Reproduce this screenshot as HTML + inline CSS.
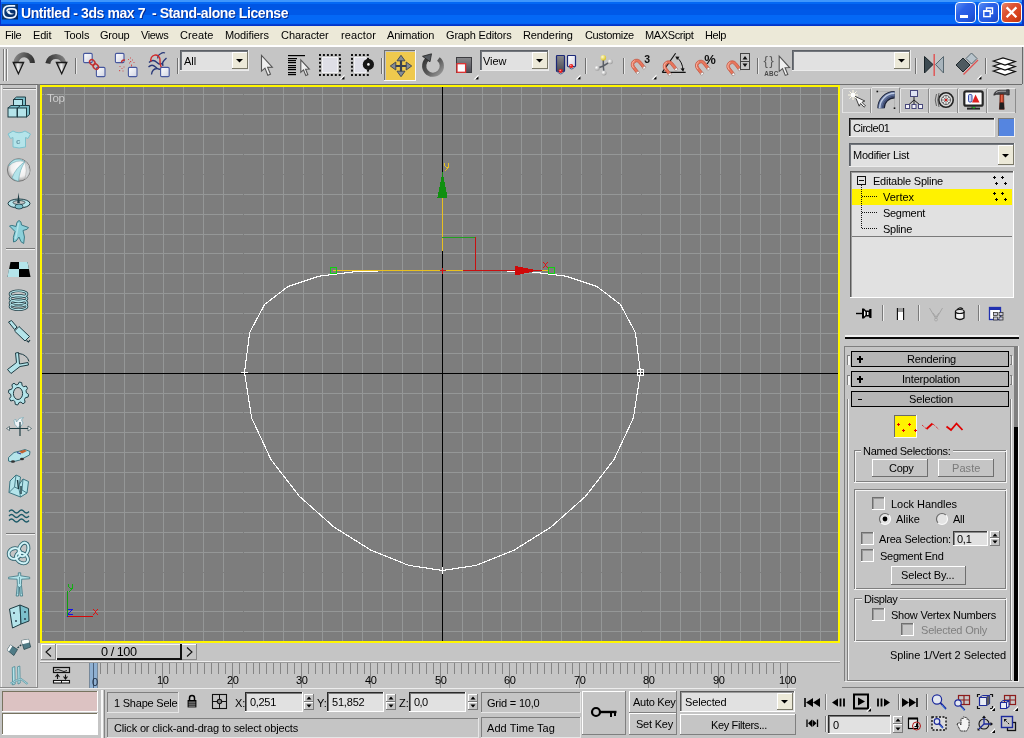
<!DOCTYPE html>
<html><head><meta charset="utf-8"><title>Untitled - 3ds max 7</title>
<style>
html,body{margin:0;padding:0;}
body{width:1024px;height:738px;overflow:hidden;position:relative;background:#c5c5c5;font-family:"Liberation Sans",sans-serif;font-size:11px;}
body div,body span,body svg{position:absolute;display:block;}
body span{white-space:nowrap;will-change:transform;}
svg{overflow:visible;}
</style></head><body>
<div style="left:0px;top:0px;width:1024px;height:26px;background:linear-gradient(to bottom,#3f96fc 0px,#3f96fc 1.6px,#0468f4 2.4px,#0468f4 3.6px,#0056e4 4.4px,#0056e4 9px,#0059e8 10px,#0059e8 14.6px,#0468f6 15.4px,#0468f6 23.4px,#0340d4 24.2px,#0030c4 26px);"></div>
<div style="left:0px;top:0px;width:1px;height:26px;background:#0831c8;"></div>
<div style="left:1022px;top:0px;width:2px;height:26px;background:#0a36c0;"></div>
<svg style="left:2px;top:4px;" width="16" height="16" viewBox="0 0 16 16"><defs><linearGradient id="gIco" x1="0" y1="0" x2="1" y2="1"><stop offset="0" stop-color="#0d478c"/><stop offset="1" stop-color="#052458"/></linearGradient></defs><rect width="16" height="15.5" fill="url(#gIco)"/><path d="M13.2 1.8 H7 Q1.5 2 1.5 7 V9 Q1.5 13.8 7 13.8 H9 Q14.3 13.8 14.3 9 V7.5 Q14.3 4.8 10.8 4.8 H8 Q5 4.8 5 7.5" fill="none" stroke="#eef6ff" stroke-width="1.7"/><path d="M5 7.5 Q5.2 10.2 9 10.6 Q11.5 10.6 12 9.2 Q10 10 8.2 8.6 Q7.2 7.6 7.8 6.4 Z" fill="#f4faff"/></svg>
<span id="t1" style="left:20.8px;top:5.199999999999999px;line-height:16px;font-size:14px;color:#fff;font-weight:bold;letter-spacing:-0.412px;text-shadow:1px 1px 0 #0a2a8a;white-space:pre;">Untitled - 3ds max 7  - Stand-alone License</span>
<div style="left:955px;top:2px;width:21px;height:21px;background:linear-gradient(135deg,#5a8ef4 0%,#2c62e8 35%,#2258e0 70%,#1a44c0 100%);border:1px solid #fff;border-radius:4px;box-sizing:border-box;"></div>
<div style="left:978px;top:2px;width:21px;height:21px;background:linear-gradient(135deg,#5a8ef4 0%,#2c62e8 35%,#2258e0 70%,#1a44c0 100%);border:1px solid #fff;border-radius:4px;box-sizing:border-box;"></div>
<div style="left:1001px;top:2px;width:21px;height:21px;background:linear-gradient(135deg,#e8866c 0%,#dc5434 35%,#d8421c 70%,#b83410 100%);border:1px solid #fff;border-radius:4px;box-sizing:border-box;"></div>
<div style="left:960px;top:15px;width:8px;height:3px;background:#fff;"></div>
<svg style="left:978px;top:2px;" width="21" height="21" viewBox="0 0 21 21"><path d="M8.5 8.5 V6 H14.5 V11.5 H12.5" fill="none" stroke="#fff" stroke-width="1.4"/><rect x="5.8" y="9" width="6.4" height="5.6" fill="none" stroke="#fff" stroke-width="1.4"/><rect x="5.1" y="8.3" width="7.8" height="1.6" fill="#fff"/></svg>
<svg style="left:1001px;top:2px;" width="21" height="21" viewBox="0 0 21 21"><path d="M5.6 5.4 L15.4 15.2 M15.4 5.4 L5.6 15.2" stroke="#fff" stroke-width="2.3" stroke-linecap="butt"/></svg>
<div style="left:0px;top:26px;width:1024px;height:19px;background:#ece9d8;"></div>
<div style="left:0px;top:45px;width:1024px;height:2px;background:#ffffff;"></div>
<span id="t2" style="left:5.1px;top:28.0px;line-height:14px;font-size:11px;color:#000;letter-spacing:-0.384px;">File</span>
<span id="t3" style="left:33.0px;top:28.0px;line-height:14px;font-size:11px;color:#000;letter-spacing:-0.167px;">Edit</span>
<span id="t4" style="left:63.5px;top:28.0px;line-height:14px;font-size:11px;color:#000;letter-spacing:-0.057px;">Tools</span>
<span id="t5" style="left:100.1px;top:28.0px;line-height:14px;font-size:11px;color:#000;letter-spacing:-0.236px;">Group</span>
<span id="t6" style="left:141.2px;top:28.0px;line-height:14px;font-size:11px;color:#000;letter-spacing:-0.371px;">Views</span>
<span id="t7" style="left:180.3px;top:28.0px;line-height:14px;font-size:11px;color:#000;letter-spacing:0.078px;">Create</span>
<span id="t8" style="left:225.0px;top:28.0px;line-height:14px;font-size:11px;color:#000;letter-spacing:-0.092px;">Modifiers</span>
<span id="t9" style="left:280.5px;top:28.0px;line-height:14px;font-size:11px;color:#000;letter-spacing:-0.066px;">Character</span>
<span id="t10" style="left:340.5px;top:28.0px;line-height:14px;font-size:11px;color:#000;letter-spacing:0.107px;">reactor</span>
<span id="t11" style="left:387.4px;top:28.0px;line-height:14px;font-size:11px;color:#000;letter-spacing:-0.202px;">Animation</span>
<span id="t12" style="left:446.3px;top:28.0px;line-height:14px;font-size:11px;color:#000;letter-spacing:-0.175px;">Graph Editors</span>
<span id="t13" style="left:523.1px;top:28.0px;line-height:14px;font-size:11px;color:#000;letter-spacing:-0.107px;">Rendering</span>
<span id="t14" style="left:584.5px;top:28.0px;line-height:14px;font-size:11px;color:#000;letter-spacing:-0.352px;">Customize</span>
<span id="t15" style="left:645.0px;top:28.0px;line-height:14px;font-size:11px;color:#000;letter-spacing:-0.385px;">MAXScript</span>
<span id="t16" style="left:705.2px;top:28.0px;line-height:14px;font-size:11px;color:#000;letter-spacing:-0.456px;">Help</span>
<div style="left:0px;top:47px;width:1024px;height:37px;background:#c5c5c5;"></div>
<div style="left:3px;top:49px;width:1px;height:32px;background:#7a7a7a;"></div>
<div style="left:4px;top:49px;width:1px;height:32px;background:#f4f4f4;"></div>
<div style="left:6px;top:49px;width:1px;height:32px;background:#7a7a7a;"></div>
<div style="left:7px;top:49px;width:1px;height:32px;background:#f4f4f4;"></div>
<div style="left:1022px;top:47px;width:1px;height:37px;background:#6a6a6a;"></div>
<div style="left:75px;top:58px;width:1px;height:16px;background:#6f6f6f;"></div>
<div style="left:76px;top:58px;width:1px;height:16px;background:#e8e8e8;"></div>
<div style="left:177px;top:58px;width:1px;height:16px;background:#6f6f6f;"></div>
<div style="left:178px;top:58px;width:1px;height:16px;background:#e8e8e8;"></div>
<div style="left:381px;top:58px;width:1px;height:16px;background:#6f6f6f;"></div>
<div style="left:382px;top:58px;width:1px;height:16px;background:#e8e8e8;"></div>
<div style="left:585px;top:58px;width:1px;height:16px;background:#6f6f6f;"></div>
<div style="left:586px;top:58px;width:1px;height:16px;background:#e8e8e8;"></div>
<div style="left:623px;top:58px;width:1px;height:16px;background:#6f6f6f;"></div>
<div style="left:624px;top:58px;width:1px;height:16px;background:#e8e8e8;"></div>
<div style="left:757px;top:58px;width:1px;height:16px;background:#6f6f6f;"></div>
<div style="left:758px;top:58px;width:1px;height:16px;background:#e8e8e8;"></div>
<div style="left:915px;top:58px;width:1px;height:16px;background:#6f6f6f;"></div>
<div style="left:916px;top:58px;width:1px;height:16px;background:#e8e8e8;"></div>
<div style="left:985px;top:58px;width:1px;height:16px;background:#6f6f6f;"></div>
<div style="left:986px;top:58px;width:1px;height:16px;background:#e8e8e8;"></div>
<div style="left:180px;top:50px;width:69px;height:21px;background:#e1e1e1;"></div>
<div style="left:180px;top:50px;width:69px;height:1px;background:#5c6066;"></div>
<div style="left:180px;top:50px;width:1px;height:21px;background:#5c6066;"></div>
<div style="left:180px;top:70px;width:69px;height:1px;background:#ececec;"></div>
<div style="left:248px;top:50px;width:1px;height:21px;background:#ececec;"></div>
<div style="left:181px;top:51px;width:67px;height:1px;background:#72767c;"></div>
<div style="left:181px;top:51px;width:1px;height:19px;background:#72767c;"></div>
<div style="left:232px;top:52px;width:16px;height:17px;background:#ece9d8;"></div>
<div style="left:232px;top:52px;width:16px;height:1px;background:#ffffff;"></div>
<div style="left:232px;top:52px;width:1px;height:17px;background:#ffffff;"></div>
<div style="left:232px;top:68px;width:16px;height:1px;background:#7a7868;"></div>
<div style="left:247px;top:52px;width:1px;height:17px;background:#7a7868;"></div>
<svg style="left:236px;top:59px;" width="8" height="4" viewBox="0 0 8 4"><path d="M0 0 H7 L3.5 3.5 Z" fill="#000"/></svg>
<span id="t17" style="left:183.6px;top:53.7px;line-height:14px;font-size:11px;color:#000;letter-spacing:-0.011px;">All</span>
<div style="left:480px;top:50px;width:69px;height:21px;background:#e1e1e1;"></div>
<div style="left:480px;top:50px;width:69px;height:1px;background:#5c6066;"></div>
<div style="left:480px;top:50px;width:1px;height:21px;background:#5c6066;"></div>
<div style="left:480px;top:70px;width:69px;height:1px;background:#ececec;"></div>
<div style="left:548px;top:50px;width:1px;height:21px;background:#ececec;"></div>
<div style="left:481px;top:51px;width:67px;height:1px;background:#72767c;"></div>
<div style="left:481px;top:51px;width:1px;height:19px;background:#72767c;"></div>
<div style="left:532px;top:52px;width:16px;height:17px;background:#ece9d8;"></div>
<div style="left:532px;top:52px;width:16px;height:1px;background:#ffffff;"></div>
<div style="left:532px;top:52px;width:1px;height:17px;background:#ffffff;"></div>
<div style="left:532px;top:68px;width:16px;height:1px;background:#7a7868;"></div>
<div style="left:547px;top:52px;width:1px;height:17px;background:#7a7868;"></div>
<svg style="left:536px;top:59px;" width="8" height="4" viewBox="0 0 8 4"><path d="M0 0 H7 L3.5 3.5 Z" fill="#000"/></svg>
<span id="t18" style="left:482.8px;top:53.7px;line-height:14px;font-size:11px;color:#000;letter-spacing:-0.039px;">View</span>
<div style="left:792px;top:50px;width:119px;height:21px;background:#e1e1e1;"></div>
<div style="left:792px;top:50px;width:119px;height:1px;background:#5c6066;"></div>
<div style="left:792px;top:50px;width:1px;height:21px;background:#5c6066;"></div>
<div style="left:792px;top:70px;width:119px;height:1px;background:#ececec;"></div>
<div style="left:910px;top:50px;width:1px;height:21px;background:#ececec;"></div>
<div style="left:793px;top:51px;width:117px;height:1px;background:#72767c;"></div>
<div style="left:793px;top:51px;width:1px;height:19px;background:#72767c;"></div>
<div style="left:894px;top:52px;width:16px;height:17px;background:#ece9d8;"></div>
<div style="left:894px;top:52px;width:16px;height:1px;background:#ffffff;"></div>
<div style="left:894px;top:52px;width:1px;height:17px;background:#ffffff;"></div>
<div style="left:894px;top:68px;width:16px;height:1px;background:#7a7868;"></div>
<div style="left:909px;top:52px;width:1px;height:17px;background:#7a7868;"></div>
<svg style="left:898px;top:59px;" width="8" height="4" viewBox="0 0 8 4"><path d="M0 0 H7 L3.5 3.5 Z" fill="#000"/></svg>
<div style="left:386px;top:52px;width:29px;height:28px;background:#efc94e;"></div>
<div style="left:384px;top:50px;width:32px;height:1px;background:#6f6f6f;"></div>
<div style="left:384px;top:50px;width:1px;height:31px;background:#6f6f6f;"></div>
<div style="left:384px;top:80px;width:32px;height:1px;background:#f8f8f8;"></div>
<div style="left:415px;top:50px;width:1px;height:31px;background:#f8f8f8;"></div>
<svg style="left:0px;top:0px;" width="1024" height="90" viewBox="0 0 1024 90"><defs><linearGradient id="gArc" gradientUnits="userSpaceOnUse" x1="13" y1="56" x2="35" y2="64"><stop offset="0" stop-color="#8e8e8e"/><stop offset="0.55" stop-color="#505050"/><stop offset="1" stop-color="#2a2a2a"/></linearGradient><linearGradient id="gArc2" gradientUnits="userSpaceOnUse" x1="45" y1="64" x2="67" y2="56"><stop offset="0" stop-color="#2a2a2a"/><stop offset="0.45" stop-color="#505050"/><stop offset="1" stop-color="#8e8e8e"/></linearGradient><linearGradient id="gHead" x1="0" y1="0" x2="1" y2="0"><stop offset="0" stop-color="#4a4a4a"/><stop offset="0.45" stop-color="#f4f4f4"/><stop offset="1" stop-color="#6a6a6a"/></linearGradient><linearGradient id="gBox" x1="0" y1="0" x2="1" y2="1"><stop offset="0" stop-color="#ffffff"/><stop offset="1" stop-color="#cfd3e2"/></linearGradient><linearGradient id="gRing" gradientUnits="userSpaceOnUse" x1="422" y1="56" x2="442" y2="76"><stop offset="0" stop-color="#2a2a2a"/><stop offset="0.55" stop-color="#5a5a5a"/><stop offset="1" stop-color="#a0a0a0"/></linearGradient><linearGradient id="gDark" x1="0" y1="0" x2="0" y2="1"><stop offset="0" stop-color="#8a8a8c"/><stop offset="1" stop-color="#4a4a54"/></linearGradient><radialGradient id="gBall" cx="0.35" cy="0.35" r="0.7"><stop offset="0" stop-color="#ffffff"/><stop offset="1" stop-color="#9a9a9a"/></radialGradient><radialGradient id="gBallY" cx="0.35" cy="0.35" r="0.7"><stop offset="0" stop-color="#fffbd0"/><stop offset="1" stop-color="#d8c020"/></radialGradient></defs><path d="M32.4 63 A8.2 8.4 0 0 0 16 63.5" fill="none" stroke="url(#gArc)" stroke-width="5"/><path d="M13.2 62.5 H23.6 L18.4 73.8 Z" fill="url(#gHead)" stroke="#1a1a1a" stroke-width="1.3"/><path d="M47.8 63.5 A8.2 8.4 0 0 1 64 63.5" fill="none" stroke="url(#gArc2)" stroke-width="5"/><path d="M56.4 62.5 H66.8 L61.7 73.8 Z" fill="url(#gHead)" stroke="#1a1a1a" stroke-width="1.3"/><rect x="83.6" y="53.4" width="8.6" height="9.2" rx="1.2" fill="url(#gBox)" stroke="#46579e" stroke-width="1.1"/><rect x="96.4" y="67.4" width="8.6" height="9.2" rx="1.2" fill="url(#gBox)" stroke="#46579e" stroke-width="1.1"/><ellipse cx="92.3" cy="62.4" rx="2.3" ry="3" fill="none" stroke="#c03030" stroke-width="1.5" transform="rotate(-45 92.3 62.4)"/><ellipse cx="95.8" cy="66.6" rx="2.3" ry="3" fill="none" stroke="#c03030" stroke-width="1.5" transform="rotate(-45 95.8 66.6)"/><rect x="115.4" y="53.4" width="8.6" height="9.2" rx="1.2" fill="url(#gBox)" stroke="#46579e" stroke-width="1.1"/><rect x="128.4" y="67.4" width="8.6" height="9.2" rx="1.2" fill="url(#gBox)" stroke="#46579e" stroke-width="1.1"/><path d="M121.5 62.5 q0.5 -3 3.4 -2.2" fill="none" stroke="#c03030" stroke-width="1.6"/><g fill="#d05050"><rect x="128" y="59" width="1" height="1"/><rect x="130" y="61" width="1.2" height="1.2"/><rect x="132" y="59.5" width="1" height="1"/><rect x="133.5" y="62" width="1" height="1"/><rect x="129" y="62.5" width="1" height="1"/><rect x="130" y="57.5" width="1" height="1"/><rect x="119.5" y="66" width="1" height="1"/><rect x="121.5" y="68" width="1" height="1"/><rect x="119" y="70" width="1.2" height="1.2"/><rect x="122.5" y="70.5" width="1" height="1"/><rect x="123.5" y="66.5" width="1" height="1"/><rect x="131" y="64.5" width="1" height="2"/></g><path d="M149 62.5 q4 -4 8 0 q3 3 5.5 0.5 M148.5 67 q3.5 -3.5 7 0 q3 3.5 6 1.5 M151.5 74.5 q0.5 -5.5 5.5 -6 M158 58.5 q-1 -3 3 -5 q2 -1.5 4 -0.5 M163 66 q-1.5 -3 1 -5.5 q1.5 -1.5 2.5 -2.5" fill="none" stroke="#283878" stroke-width="1.3"/><path d="M151.2 61.5 A4.6 4.6 0 1 1 160 60 Q159.5 64 161.5 68" fill="none" stroke="#d02828" stroke-width="1.4"/><rect x="160.6" y="67.4" width="8.6" height="9.2" rx="1.2" fill="url(#gBox)" stroke="#46579e" stroke-width="1.1"/><path transform="translate(261.5 55.3) scale(1.02)" d="M0 0 V15.5 L3.4 12.6 L6.2 19.6 L8.8 18.6 L6 11.8 L10.6 11.6 Z" fill="#f0f0f0" stroke="#555" stroke-width="1.08"/><rect x="288" y="55" width="17" height="1.2" fill="#000"/><rect x="288" y="58" width="9" height="1.2" fill="#000"/><rect x="288" y="60" width="8" height="1.2" fill="#000"/><rect x="288" y="62" width="8" height="1.2" fill="#000"/><rect x="288" y="65" width="8" height="1.2" fill="#000"/><rect x="288" y="67" width="8" height="1.2" fill="#000"/><rect x="288" y="69" width="8" height="1.2" fill="#000"/><rect x="288" y="72" width="8" height="1.2" fill="#000"/><rect x="288" y="74" width="8" height="1.2" fill="#000"/><path transform="translate(300.8 59.8) scale(0.8)" d="M0 0 V15.5 L3.4 12.6 L6.2 19.6 L8.8 18.6 L6 11.8 L10.6 11.6 Z" fill="#f0f0f0" stroke="#555" stroke-width="1.38"/><rect x="322.5" y="57.5" width="15" height="15" fill="#dedee6" stroke="#f0f0f4" stroke-width="1"/><rect x="319.0" y="54" width="2" height="2" fill="#111"/><rect x="319.0" y="74" width="2" height="2" fill="#111"/><rect x="322.9" y="54" width="2" height="2" fill="#111"/><rect x="322.9" y="74" width="2" height="2" fill="#111"/><rect x="326.9" y="54" width="2" height="2" fill="#111"/><rect x="326.9" y="74" width="2" height="2" fill="#111"/><rect x="330.8" y="54" width="2" height="2" fill="#111"/><rect x="330.8" y="74" width="2" height="2" fill="#111"/><rect x="334.8" y="54" width="2" height="2" fill="#111"/><rect x="334.8" y="74" width="2" height="2" fill="#111"/><rect x="338.7" y="54" width="2" height="2" fill="#111"/><rect x="338.7" y="74" width="2" height="2" fill="#111"/><rect x="319" y="57.9" width="2" height="2" fill="#111"/><rect x="339" y="57.9" width="2" height="2" fill="#111"/><rect x="319" y="61.8" width="2" height="2" fill="#111"/><rect x="339" y="61.8" width="2" height="2" fill="#111"/><rect x="319" y="65.7" width="2" height="2" fill="#111"/><rect x="339" y="65.7" width="2" height="2" fill="#111"/><rect x="319" y="69.6" width="2" height="2" fill="#111"/><rect x="339" y="69.6" width="2" height="2" fill="#111"/><path d="M344.5 74.5 V79.5 H339.5 Z" fill="#ffffff"/><path d="M344.5 76.3 V79.5 H341.3 Z" fill="#000"/><rect x="354.5" y="57.5" width="11.5" height="15" fill="#dedee6" stroke="#f0f0f4" stroke-width="1"/><rect x="351.0" y="54" width="2" height="2" fill="#111"/><rect x="351.0" y="74" width="2" height="2" fill="#111"/><rect x="354.9" y="54" width="2" height="2" fill="#111"/><rect x="354.9" y="74" width="2" height="2" fill="#111"/><rect x="358.9" y="54" width="2" height="2" fill="#111"/><rect x="358.9" y="74" width="2" height="2" fill="#111"/><rect x="362.8" y="54" width="2" height="2" fill="#111"/><rect x="362.8" y="74" width="2" height="2" fill="#111"/><rect x="366.8" y="54" width="2" height="2" fill="#111"/><rect x="366.8" y="74" width="2" height="2" fill="#111"/><rect x="351" y="57.9" width="2" height="2" fill="#111"/><rect x="367" y="57.9" width="2" height="2" fill="#111"/><rect x="351" y="61.8" width="2" height="2" fill="#111"/><rect x="367" y="61.8" width="2" height="2" fill="#111"/><rect x="351" y="65.7" width="2" height="2" fill="#111"/><rect x="367" y="65.7" width="2" height="2" fill="#111"/><rect x="351" y="69.6" width="2" height="2" fill="#111"/><rect x="367" y="69.6" width="2" height="2" fill="#111"/><circle cx="368.4" cy="64.4" r="5.6" fill="#161616"/><circle cx="368.4" cy="64.4" r="1.3" fill="#f4f4f4"/><path d="M401 58 V74 M393 66 H409" stroke="#3a4250" stroke-width="2.2"/><g fill="#868c94" stroke="#3a4250" stroke-width="0.9"><path d="M401 55.3 L405 60.8 H397 Z"/><path d="M401 76.7 L405 71.2 H397 Z"/><path d="M390.3 66 L395.8 62 V70 Z"/><path d="M411.7 66 L406.2 62 V70 Z"/></g><path d="M428.2 58.6 A8.8 8.8 0 1 0 438.4 59" fill="none" stroke="url(#gRing)" stroke-width="4.2"/><path d="M422.5 56.3 L431.5 53.8 L430 61.8 Z" fill="#55595e" stroke="#222" stroke-width="0.8"/><rect x="456.5" y="57.5" width="15" height="15" fill="url(#gDark)" stroke="#3c3c40" stroke-width="1"/><rect x="457" y="63.7" width="8.6" height="8.6" fill="#fafcff" stroke="#e03030" stroke-width="1.3"/><path d="M478.5 74.5 V79.5 H473.5 Z" fill="#ffffff"/><path d="M478.5 76.3 V79.5 H475.3 Z" fill="#000"/><rect x="556.5" y="55.5" width="8" height="16" rx="0.8" fill="url(#gDark)" stroke="#1c2878" stroke-width="1.2"/><rect x="567.5" y="55.5" width="8" height="11" rx="0.8" fill="url(#gBox)" stroke="#1c2878" stroke-width="1.2"/><path d="M556.8 71 q4 6 7.6 0 M567.8 66 q4 6 7.6 0" fill="none" stroke="#4a5a8a" stroke-width="0.9"/><circle cx="560.6" cy="71" r="2.1" fill="#e82020"/><circle cx="571.2" cy="66" r="2.1" fill="#e82020"/><circle cx="560.2" cy="70.5" r="0.7" fill="#ffb0b0"/><circle cx="570.8" cy="65.5" r="0.7" fill="#ffb0b0"/><path d="M580.5 74.5 V79.5 H575.5 Z" fill="#ffffff"/><path d="M580.5 76.3 V79.5 H577.3 Z" fill="#000"/><path d="M603.3 66 L603.3 58 M603.3 66 L610.3 61.7 M603.3 66 L597.2 68.2 M603.3 66 L604 73" stroke="#5a5e66" stroke-width="1.5"/><circle cx="603.3" cy="57.7" r="2.8" fill="url(#gBallY)"/><circle cx="610.3" cy="61.7" r="2.5" fill="url(#gBall)"/><circle cx="597.2" cy="68.2" r="2.5" fill="url(#gBall)"/><circle cx="604" cy="73" r="2.5" fill="url(#gBall)"/><g transform="translate(636.6 64.6) rotate(-38)"><path d="M-5.4 0 A5.4 5.4 0 0 1 5.4 0 V7.6 H2.7 V0 A2.7 2.7 0 0 0 -2.7 0 V7.6 H-5.4 Z" fill="#e8765c" stroke="#c04a34" stroke-width="0.6"/><path d="M-4.4 1 V0 A4.4 4.4 0 0 1 1 -4.3" fill="none" stroke="#f8b8a8" stroke-width="0.9"/><rect x="-5.4" y="6.2" width="2.7" height="2" fill="#fcfcfc" stroke="#8a8a8a" stroke-width="0.5"/><rect x="2.7" y="6.2" width="2.7" height="2" fill="#fcfcfc" stroke="#8a8a8a" stroke-width="0.5"/></g><text x="644.2" y="62.6" font-size="10.5" font-weight="bold" font-family="Liberation Sans" fill="#111">3</text><path d="M656.5 74.5 V79.5 H651.5 Z" fill="#ffffff"/><path d="M656.5 76.3 V79.5 H653.3 Z" fill="#000"/><path d="M662.2 72.4 H685.7 M662.2 72.4 L675.6 53.3" fill="none" stroke="#111" stroke-width="1.1"/><path d="M677 57.5 Q682.5 62 683 70" fill="none" stroke="#111" stroke-width="1"/><path d="M675.3 56.4 l4.2 0.3 l-2.4 3.3 Z M683.2 71.8 l-2.7 -3.3 l4 -0.3 Z" fill="#111"/><g transform="translate(668.6 66.2) rotate(-38)"><path d="M-5.4 0 A5.4 5.4 0 0 1 5.4 0 V7.6 H2.7 V0 A2.7 2.7 0 0 0 -2.7 0 V7.6 H-5.4 Z" fill="#e8765c" stroke="#c04a34" stroke-width="0.6"/><path d="M-4.4 1 V0 A4.4 4.4 0 0 1 1 -4.3" fill="none" stroke="#f8b8a8" stroke-width="0.9"/><rect x="-5.4" y="6.2" width="2.7" height="2" fill="#fcfcfc" stroke="#8a8a8a" stroke-width="0.5"/><rect x="2.7" y="6.2" width="2.7" height="2" fill="#fcfcfc" stroke="#8a8a8a" stroke-width="0.5"/></g><g transform="translate(700.8 65.6) rotate(-38)"><path d="M-5.4 0 A5.4 5.4 0 0 1 5.4 0 V7.6 H2.7 V0 A2.7 2.7 0 0 0 -2.7 0 V7.6 H-5.4 Z" fill="#e8765c" stroke="#c04a34" stroke-width="0.6"/><path d="M-4.4 1 V0 A4.4 4.4 0 0 1 1 -4.3" fill="none" stroke="#f8b8a8" stroke-width="0.9"/><rect x="-5.4" y="6.2" width="2.7" height="2" fill="#fcfcfc" stroke="#8a8a8a" stroke-width="0.5"/><rect x="2.7" y="6.2" width="2.7" height="2" fill="#fcfcfc" stroke="#8a8a8a" stroke-width="0.5"/></g><text x="704.3" y="64" font-size="13" font-weight="bold" font-family="Liberation Sans" fill="#111">%</text><g transform="translate(732.2 66.2) rotate(-38)"><path d="M-5.4 0 A5.4 5.4 0 0 1 5.4 0 V7.6 H2.7 V0 A2.7 2.7 0 0 0 -2.7 0 V7.6 H-5.4 Z" fill="#e8765c" stroke="#c04a34" stroke-width="0.6"/><path d="M-4.4 1 V0 A4.4 4.4 0 0 1 1 -4.3" fill="none" stroke="#f8b8a8" stroke-width="0.9"/><rect x="-5.4" y="6.2" width="2.7" height="2" fill="#fcfcfc" stroke="#8a8a8a" stroke-width="0.5"/><rect x="2.7" y="6.2" width="2.7" height="2" fill="#fcfcfc" stroke="#8a8a8a" stroke-width="0.5"/></g><rect x="740.5" y="53.5" width="9" height="8" fill="#c8c8c8" stroke="#444" stroke-width="1"/><rect x="740.5" y="61.5" width="9" height="8" fill="#c8c8c8" stroke="#444" stroke-width="1"/><path d="M742.5 59.5 h5 l-2.5 -3.5 Z M742.5 63.5 h5 l-2.5 3.5 Z" fill="#111"/><text x="763.6" y="65" font-size="13.5" font-family="Liberation Sans" fill="#5a5a5a" letter-spacing="1.2">{}</text><text x="764.3" y="75.7" font-size="6.3" font-weight="bold" font-family="Liberation Sans" fill="#4a4a4a" letter-spacing="0.2">ABC</text><path transform="translate(779.2 56.2) scale(0.98)" d="M0 0 V15.5 L3.4 12.6 L6.2 19.6 L8.8 18.6 L6 11.8 L10.6 11.6 Z" fill="#f0f0f0" stroke="#555" stroke-width="1.12"/><path d="M924.5 56.5 V73 L933 64.5 Z" fill="#3c4a52" stroke="#1a2428" stroke-width="1"/><path d="M943.5 56.5 V73 L935.5 64.5 Z" fill="#a8b4bc" stroke="#56666e" stroke-width="1"/><path d="M934.2 54 V76" stroke="#e05858" stroke-width="1.5"/><path d="M956 65 L963 58 L970 65 L963 72 Z" fill="#4e5a60" stroke="#20282c" stroke-width="1"/><path d="M966 58.5 L971.5 53 L977 58.5 L971.5 64 Z" fill="#b8c4cc" stroke="#56666e" stroke-width="1"/><path d="M963.5 74.5 L978 60" stroke="#e05050" stroke-width="1.3"/><path d="M981.5 74.5 V79.5 H976.5 Z" fill="#ffffff"/><path d="M981.5 76.3 V79.5 H978.3 Z" fill="#000"/><g fill="#fff" stroke="#111" stroke-width="1.3" stroke-linejoin="miter"><path d="M993.5 71 L1003 68 L1015 71.5 L1005 75 Z"/><path d="M993.5 66 L1003 63 L1015 66.5 L1005 70 Z"/><path d="M993.5 61 L1003 58 L1015 61.5 L1005 65 Z"/></g></svg>
<div style="left:0px;top:84px;width:1022px;height:1px;background:#6f6f6f;"></div>
<div style="left:38px;top:84px;width:2px;height:560px;background:#808080;"></div>
<div style="left:40px;top:85px;width:800px;height:558px;background:#fff600;"></div>
<div style="left:42px;top:87px;width:796px;height:554px;background:#7d7d7d;"></div>
<svg style="left:0px;top:0px;shape-rendering:crispEdges;" width="1024" height="738" viewBox="0 0 1024 738"><rect x="64" y="87" width="1" height="554" fill="#959797"/><rect x="84" y="87" width="1" height="554" fill="#959797"/><rect x="104" y="87" width="1" height="554" fill="#959797"/><rect x="124" y="87" width="1" height="554" fill="#959797"/><rect x="143" y="87" width="1" height="554" fill="#959797"/><rect x="163" y="87" width="1" height="554" fill="#959797"/><rect x="42" y="94" width="796" height="1" fill="#959797"/><rect x="183" y="87" width="1" height="554" fill="#959797"/><rect x="42" y="114" width="796" height="1" fill="#959797"/><rect x="203" y="87" width="1" height="554" fill="#959797"/><rect x="42" y="134" width="796" height="1" fill="#959797"/><rect x="223" y="87" width="1" height="554" fill="#959797"/><rect x="42" y="154" width="796" height="1" fill="#959797"/><rect x="263" y="87" width="1" height="554" fill="#959797"/><rect x="42" y="194" width="796" height="1" fill="#959797"/><rect x="283" y="87" width="1" height="554" fill="#959797"/><rect x="42" y="214" width="796" height="1" fill="#959797"/><rect x="303" y="87" width="1" height="554" fill="#959797"/><rect x="42" y="234" width="796" height="1" fill="#959797"/><rect x="322" y="87" width="1" height="554" fill="#959797"/><rect x="42" y="253" width="796" height="1" fill="#959797"/><rect x="342" y="87" width="1" height="554" fill="#959797"/><rect x="42" y="273" width="796" height="1" fill="#959797"/><rect x="362" y="87" width="1" height="554" fill="#959797"/><rect x="42" y="293" width="796" height="1" fill="#959797"/><rect x="382" y="87" width="1" height="554" fill="#959797"/><rect x="42" y="313" width="796" height="1" fill="#959797"/><rect x="402" y="87" width="1" height="554" fill="#959797"/><rect x="42" y="333" width="796" height="1" fill="#959797"/><rect x="422" y="87" width="1" height="554" fill="#959797"/><rect x="42" y="353" width="796" height="1" fill="#959797"/><rect x="462" y="87" width="1" height="554" fill="#959797"/><rect x="42" y="393" width="796" height="1" fill="#959797"/><rect x="482" y="87" width="1" height="554" fill="#959797"/><rect x="42" y="412" width="796" height="1" fill="#959797"/><rect x="501" y="87" width="1" height="554" fill="#959797"/><rect x="42" y="432" width="796" height="1" fill="#959797"/><rect x="521" y="87" width="1" height="554" fill="#959797"/><rect x="42" y="452" width="796" height="1" fill="#959797"/><rect x="541" y="87" width="1" height="554" fill="#959797"/><rect x="42" y="472" width="796" height="1" fill="#959797"/><rect x="561" y="87" width="1" height="554" fill="#959797"/><rect x="42" y="492" width="796" height="1" fill="#959797"/><rect x="581" y="87" width="1" height="554" fill="#959797"/><rect x="42" y="512" width="796" height="1" fill="#959797"/><rect x="601" y="87" width="1" height="554" fill="#959797"/><rect x="42" y="532" width="796" height="1" fill="#959797"/><rect x="621" y="87" width="1" height="554" fill="#959797"/><rect x="42" y="552" width="796" height="1" fill="#959797"/><rect x="660" y="87" width="1" height="554" fill="#959797"/><rect x="42" y="591" width="796" height="1" fill="#959797"/><rect x="680" y="87" width="1" height="554" fill="#959797"/><rect x="42" y="611" width="796" height="1" fill="#959797"/><rect x="700" y="87" width="1" height="554" fill="#959797"/><rect x="42" y="631" width="796" height="1" fill="#959797"/><rect x="720" y="87" width="1" height="554" fill="#959797"/><rect x="740" y="87" width="1" height="554" fill="#959797"/><rect x="760" y="87" width="1" height="554" fill="#959797"/><rect x="780" y="87" width="1" height="554" fill="#959797"/><rect x="800" y="87" width="1" height="554" fill="#959797"/><rect x="820" y="87" width="1" height="554" fill="#959797"/><rect x="44" y="87" width="1" height="554" fill="#7d7d7d"/><rect x="243" y="87" width="1" height="554" fill="#7d7d7d"/><rect x="42" y="174" width="796" height="1" fill="#7d7d7d"/><rect x="641" y="87" width="1" height="554" fill="#7d7d7d"/><rect x="42" y="572" width="796" height="1" fill="#7d7d7d"/><rect x="442" y="87" width="1" height="554" fill="#000"/><rect x="42" y="373" width="796" height="1" fill="#000"/><polyline points="442.5,270.5 397.1,270.4 355.4,271.6 318.7,276.2 288.0,286.5 264.6,304.5 249.7,332.4 244.5,372.5 251.6,417.9 271.0,459.6 299.4,496.3 333.9,527.0 371.3,550.4 408.5,565.3 442.5,570.5 476.5,565.3 513.7,550.4 551.1,527.0 585.6,496.3 614.0,459.6 633.4,417.9 640.5,372.5 635.3,332.4 620.4,304.5 597.0,286.5 566.3,276.2 529.6,271.6 487.9,270.4 442.5,270.5" fill="none" stroke="#ffffff" stroke-width="1.1"/><path d="M241 372.5 h7 M244.5 369 v7 M439 570.5 h7 M442.5 567 v7" stroke="#fff" stroke-width="1"/><rect x="637.5" y="369.5" width="6" height="6" fill="none" stroke="#fff" stroke-width="1"/><path d="M637 372.5 h7 M640.5 369 v7" stroke="#fff" stroke-width="1"/><rect x="333" y="270" width="130" height="1" fill="#e8c020"/><rect x="541" y="270" width="8" height="1" fill="#e8c020"/><rect x="330.5" y="267.5" width="6" height="6" fill="none" stroke="#10d010" stroke-width="1"/><rect x="548.5" y="267.5" width="6" height="6" fill="none" stroke="#10d010" stroke-width="1"/><rect x="442" y="197" width="1" height="54" fill="#e8c020"/><path d="M442.5 172 L447.5 197.5 H437.5 Z" fill="#109010"/><rect x="442" y="237" width="34" height="1" fill="#20a020"/><rect x="475" y="237" width="1" height="34" fill="#c81010"/><rect x="463" y="270" width="79" height="1" fill="#c81010"/><path d="M515 266 V275.5 L538 270.5 Z" fill="#d00808"/><path d="M439.5 270.5 h6 M442.5 267.5 v6" stroke="#d01010" stroke-width="1"/><rect x="68" y="616" width="25" height="1" fill="#d40808"/><rect x="67" y="591" width="1" height="25" fill="#10a010"/><rect x="67" y="616" width="1" height="1" fill="#1010e0"/><rect x="543" y="262" width="1" height="1" fill="#e01010"/><rect x="547" y="262" width="1" height="1" fill="#e01010"/><rect x="544" y="263" width="1" height="1" fill="#e01010"/><rect x="546" y="263" width="1" height="1" fill="#e01010"/><rect x="545" y="264" width="1" height="1" fill="#e01010"/><rect x="545" y="265" width="1" height="1" fill="#e01010"/><rect x="544" y="266" width="1" height="1" fill="#e01010"/><rect x="546" y="266" width="1" height="1" fill="#e01010"/><rect x="543" y="267" width="1" height="1" fill="#e01010"/><rect x="547" y="267" width="1" height="1" fill="#e01010"/><rect x="444" y="163" width="1" height="1" fill="#e8c020"/><rect x="448" y="163" width="1" height="1" fill="#e8c020"/><rect x="444" y="164" width="1" height="1" fill="#e8c020"/><rect x="448" y="164" width="1" height="1" fill="#e8c020"/><rect x="444" y="165" width="1" height="1" fill="#e8c020"/><rect x="448" y="165" width="1" height="1" fill="#e8c020"/><rect x="445" y="166" width="1" height="1" fill="#e8c020"/><rect x="448" y="166" width="1" height="1" fill="#e8c020"/><rect x="446" y="167" width="1" height="1" fill="#e8c020"/><rect x="447" y="167" width="1" height="1" fill="#e8c020"/><rect x="448" y="167" width="1" height="1" fill="#e8c020"/><rect x="447" y="168" width="1" height="1" fill="#e8c020"/><rect x="446" y="169" width="1" height="1" fill="#e8c020"/><rect x="445" y="170" width="1" height="1" fill="#e8c020"/><rect x="93" y="609" width="1" height="1" fill="#e01010"/><rect x="97" y="609" width="1" height="1" fill="#e01010"/><rect x="94" y="610" width="1" height="1" fill="#e01010"/><rect x="96" y="610" width="1" height="1" fill="#e01010"/><rect x="95" y="611" width="1" height="1" fill="#e01010"/><rect x="95" y="612" width="1" height="1" fill="#e01010"/><rect x="94" y="613" width="1" height="1" fill="#e01010"/><rect x="96" y="613" width="1" height="1" fill="#e01010"/><rect x="93" y="614" width="1" height="1" fill="#e01010"/><rect x="97" y="614" width="1" height="1" fill="#e01010"/><rect x="68" y="584" width="1" height="1" fill="#10b010"/><rect x="72" y="584" width="1" height="1" fill="#10b010"/><rect x="68" y="585" width="1" height="1" fill="#10b010"/><rect x="72" y="585" width="1" height="1" fill="#10b010"/><rect x="68" y="586" width="1" height="1" fill="#10b010"/><rect x="72" y="586" width="1" height="1" fill="#10b010"/><rect x="69" y="587" width="1" height="1" fill="#10b010"/><rect x="72" y="587" width="1" height="1" fill="#10b010"/><rect x="70" y="588" width="1" height="1" fill="#10b010"/><rect x="71" y="588" width="1" height="1" fill="#10b010"/><rect x="72" y="588" width="1" height="1" fill="#10b010"/><rect x="71" y="589" width="1" height="1" fill="#10b010"/><rect x="70" y="590" width="1" height="1" fill="#10b010"/><rect x="69" y="591" width="1" height="1" fill="#10b010"/><rect x="68" y="609" width="1" height="1" fill="#1414e8"/><rect x="69" y="609" width="1" height="1" fill="#1414e8"/><rect x="70" y="609" width="1" height="1" fill="#1414e8"/><rect x="71" y="609" width="1" height="1" fill="#1414e8"/><rect x="72" y="609" width="1" height="1" fill="#1414e8"/><rect x="71" y="610" width="1" height="1" fill="#1414e8"/><rect x="70" y="611" width="1" height="1" fill="#1414e8"/><rect x="69" y="612" width="1" height="1" fill="#1414e8"/><rect x="68" y="613" width="1" height="1" fill="#1414e8"/><rect x="68" y="614" width="1" height="1" fill="#1414e8"/><rect x="69" y="614" width="1" height="1" fill="#1414e8"/><rect x="70" y="614" width="1" height="1" fill="#1414e8"/><rect x="71" y="614" width="1" height="1" fill="#1414e8"/><rect x="72" y="614" width="1" height="1" fill="#1414e8"/></svg>
<span id="t19" style="left:47px;top:91.0px;line-height:14px;font-size:11.5px;color:#cdcdcd;letter-spacing:-0.349px;">Top</span>
<div style="left:0px;top:85px;width:38px;height:603px;background:#c5c5c5;"></div>
<div style="left:1px;top:85px;width:1px;height:603px;background:#f0f0f0;"></div>
<div style="left:36px;top:85px;width:1px;height:603px;background:#e8e8e8;"></div>
<div style="left:37px;top:85px;width:1px;height:603px;background:#8a8a8a;"></div>
<div style="left:0px;top:687px;width:38px;height:1px;background:#8a8a8a;"></div>
<div style="left:3px;top:88px;width:33px;height:1px;background:#7a7a7a;"></div>
<div style="left:3px;top:89px;width:33px;height:1px;background:#f0f0f0;"></div>
<div style="left:6px;top:248px;width:29px;height:1px;background:#7a7a7a;"></div>
<div style="left:6px;top:249px;width:29px;height:1px;background:#f0f0f0;"></div>
<div style="left:6px;top:533px;width:29px;height:1px;background:#7a7a7a;"></div>
<div style="left:6px;top:534px;width:29px;height:1px;background:#f0f0f0;"></div>
<svg style="left:0px;top:0px;" width="64" height="738" viewBox="0 0 64 738"><path d="M13.5 99.5 l3 -2.5 h9 v9 l-3 2.5 Z" fill="#7cc0cc" stroke="#1e3c44" stroke-width="1"/><rect x="13.5" y="99.5" width="9" height="9" fill="#b4e4ea" stroke="#1e3c44" stroke-width="1"/><path d="M8 108.0 l3 -2.5 h9 v9 l-3 2.5 Z" fill="#7cc0cc" stroke="#1e3c44" stroke-width="1"/><rect x="8" y="108.0" width="9" height="9" fill="#b4e4ea" stroke="#1e3c44" stroke-width="1"/><path d="M17.5 108.0 l3 -2.5 h9 v9 l-3 2.5 Z" fill="#7cc0cc" stroke="#1e3c44" stroke-width="1"/><rect x="17.5" y="108.0" width="9" height="9" fill="#b4e4ea" stroke="#1e3c44" stroke-width="1"/><path d="M8 134 L13 131 Q19 134.5 25 131 L30.5 134 L28 138.5 L25.5 137.5 V147 Q19 149 13 147 V137.5 L10.5 138.5 Z" fill="#b4e4ea" stroke="#7cc0cc" stroke-width="1"/><text x="16" y="143.5" font-size="8" font-weight="bold" font-family="Liberation Sans" fill="#6a9aa8">c</text><defs><radialGradient id="gSph" cx="0.55" cy="0.4" r="0.65"><stop offset="0" stop-color="#ffffff"/><stop offset="0.6" stop-color="#eeeeee"/><stop offset="1" stop-color="#8c8c8c"/></radialGradient></defs><circle cx="18.7" cy="170" r="11.3" fill="url(#gSph)" stroke="#6a6a6a" stroke-width="0.8"/><path d="M25 161.5 Q16 159 8.5 166 Q10 161.5 15 159.5 Q20 158 25 161.5 Z" fill="#b4e4ea" stroke="#5a98a4" stroke-width="0.5"/><path d="M25 161.5 Q15.5 168 12 178 Q14.5 180.5 18.5 181.3 Q19.5 170 25 161.5 Z" fill="#b4e4ea" stroke="#5a98a4" stroke-width="0.5"/><path d="M25 161.5 Q27.5 170 25 179.5 Q28.5 176.5 29.8 172 Q29.5 166 25 161.5 Z" fill="#d4d8da" stroke="#9a9a9a" stroke-width="0.4"/><ellipse cx="19" cy="203.5" rx="11" ry="4.5" fill="#b4e4ea" stroke="#1e3c44" stroke-width="1"/><ellipse cx="19" cy="202.5" rx="6" ry="2" fill="#c5c5c5" stroke="#1e3c44" stroke-width="0.8"/><path d="M18.5 192.5 L19.8 203 L17.2 203 Z" fill="#1e3c44"/><ellipse cx="19" cy="206.5" rx="4" ry="2.5" fill="#7cc0cc" stroke="#1e3c44" stroke-width="0.8"/><path d="M19 220.5 Q21.5 221 21.5 225 L28.5 227.5 Q28.5 229.5 23 230.5 Q25.5 237 23.7 243.5 Q20.5 243 19 237 Q16 242.5 13.5 242 Q12.5 238 15 231.5 L9.5 226 Q11 224.5 16 226.5 Q16.5 221 19 220.5 Z" fill="#8cd0da" stroke="#3c7884" stroke-width="1"/><path d="M18.5 223 Q17.5 230 15.5 239" fill="none" stroke="#b4e4ea" stroke-width="1.6"/><path d="M10.5 262 H27.5 L30.5 277 H7.5 Z" fill="#000"/><path d="M19 262 H27.5 L28.9 269 H19 Z M19 269 H8.9 L7.5 277 H19 Z" fill="#b4e4ea"/><ellipse cx="18.5" cy="294" rx="8.5" ry="3.2" fill="none" stroke="#1e3c44" stroke-width="2.6"/><ellipse cx="18.5" cy="298.5" rx="8.5" ry="3.2" fill="none" stroke="#1e3c44" stroke-width="2.6"/><ellipse cx="18.5" cy="303" rx="8.5" ry="3.2" fill="none" stroke="#1e3c44" stroke-width="2.6"/><ellipse cx="18.5" cy="306.5" rx="8.5" ry="3.2" fill="none" stroke="#1e3c44" stroke-width="2.6"/><ellipse cx="18.5" cy="294" rx="8.5" ry="3.2" fill="none" stroke="#b4e4ea" stroke-width="1.2"/><ellipse cx="18.5" cy="298.5" rx="8.5" ry="3.2" fill="none" stroke="#b4e4ea" stroke-width="1.2"/><ellipse cx="18.5" cy="303" rx="8.5" ry="3.2" fill="none" stroke="#b4e4ea" stroke-width="1.2"/><ellipse cx="18.5" cy="306.5" rx="8.5" ry="3.2" fill="none" stroke="#b4e4ea" stroke-width="1.2"/><path d="M8.5 322 L11.5 320.5 L17 327 L14.5 329.5 Z" fill="#b4e4ea" stroke="#1e3c44" stroke-width="1"/><path d="M14.5 331 L19 326.5 L29.5 336.5 L25 341 Z" fill="#b4e4ea" stroke="#1e3c44" stroke-width="1"/><path d="M26.5 340.5 l2 1.5 l1.5 -2" fill="none" stroke="#1e3c44" stroke-width="1.2"/><path d="M15.5 353 L18.5 352.5 L19.5 364 L28 362.5 L28.5 365 L20 366.5 L11 373.5 L7.5 369.5 L16.5 362.5 Z" fill="#b4e4ea" stroke="#1e3c44" stroke-width="1"/><path d="M19 353.5 Q27 354.5 29 361.5" fill="none" stroke="#1e3c44" stroke-width="1"/><path d="M28.6 394.4 L28.1 397.1 L25.6 397.6 L24.5 399.4 L25.1 402.3 L23.0 403.8 L20.9 402.1 L19.1 402.5 L17.7 405.0 L15.3 404.4 L14.9 401.5 L13.3 400.3 L10.8 401.0 L9.5 398.7 L11.0 396.3 L10.6 394.2 L8.4 392.6 L8.9 389.9 L11.4 389.4 L12.5 387.6 L11.9 384.7 L14.0 383.2 L16.1 384.9 L17.9 384.5 L19.3 382.0 L21.7 382.6 L22.1 385.5 L23.7 386.7 L26.2 386.0 L27.5 388.3 L26.0 390.7 L26.4 392.8 Z" fill="#b4e4ea" stroke="#1e3c44" stroke-width="1"/><ellipse cx="18" cy="393.5" rx="4.6" ry="6" fill="#c5c5c5" stroke="#1e3c44" stroke-width="1"/><path d="M14 420.5 L15.5 419 L16.5 422 Q19 417 23.5 417.5 L21.5 420 L23 423 Q22 427 17.5 427.5 Q14 425 14 420.5 Z" fill="#f0f4f8" stroke="#7aa8b4" stroke-width="0.8"/><path d="M7 428.5 H31 M20 422 V436" stroke="#1e3c44" stroke-width="1.2"/><path d="M6.5 428.5 l3 -2 v4 Z M31.5 428.5 l-3.5 -2.5 v5 Z" fill="#f4f4f4" stroke="#1e3c44" stroke-width="0.6"/><path d="M8.5 457.5 L14 452.5 L20 451 L25 449.5 L30 451.5 L29.5 455 L20 460 L12 462 L8.5 461 Z" fill="#b4e4ea" stroke="#3c7480" stroke-width="1"/><path d="M19 451.5 L24.5 449.8 L27 451 L22 453.5 Z" fill="#c06030"/><path d="M17 452.5 l4 1.5" stroke="#30408c" stroke-width="1.2"/><ellipse cx="13" cy="461.5" rx="2" ry="1.3" fill="#333"/><ellipse cx="22" cy="459" rx="2" ry="1.3" fill="#333"/><path d="M10 481 L16 475 L20.5 477 L19.5 484 L23 479 L28.5 481.5 L27 493 L20.5 497 L9 492.5 Z" fill="#b4e4ea" stroke="#3c7480" stroke-width="1"/><path d="M16 475 L14.5 487 L9 492.5 M14.5 487 L19 489 L20.5 497 M19.5 484 L19 489 M23 479 L22 490 L27 493" fill="none" stroke="#3c7480" stroke-width="0.9"/><path d="M17.5 480 l1 9 M21 486 l0 8" stroke="#1e3c44" stroke-width="1.4"/><path d="M9 511.5 q2.5 -3 5 0 t5 0 t5 0 t5 0" fill="none" stroke="#1c5a68" stroke-width="1.3"/><path d="M9 516 q2.5 -3 5 0 t5 0 t5 0 t5 0" fill="none" stroke="#1c5a68" stroke-width="1.3"/><path d="M9 520.5 q2.5 -3 5 0 t5 0 t5 0 t5 0" fill="none" stroke="#1c5a68" stroke-width="1.3"/><g fill="none" stroke="#2c5c68" stroke-width="3.8"><ellipse cx="14.5" cy="553.5" rx="6" ry="5.2" transform="rotate(-20 14.5 553.5)"/><ellipse cx="23.5" cy="549.5" rx="4.6" ry="7" transform="rotate(20 23.5 549.5)"/><ellipse cx="22" cy="558" rx="6.5" ry="4.8" transform="rotate(35 22 558)"/></g><g fill="none" stroke="#b4e4ea" stroke-width="2.2"><ellipse cx="14.5" cy="553.5" rx="6" ry="5.2" transform="rotate(-20 14.5 553.5)"/><ellipse cx="23.5" cy="549.5" rx="4.6" ry="7" transform="rotate(20 23.5 549.5)"/><ellipse cx="22" cy="558" rx="6.5" ry="4.8" transform="rotate(35 22 558)"/></g><g fill="none" stroke="#eafcff" stroke-width="0.7"><ellipse cx="14.5" cy="553.5" rx="6" ry="5.2" transform="rotate(-20 14.5 553.5)"/><ellipse cx="23.5" cy="549.5" rx="4.6" ry="7" transform="rotate(20 23.5 549.5)"/><ellipse cx="22" cy="558" rx="6.5" ry="4.8" transform="rotate(35 22 558)"/></g><path d="M18.3 572.8 h2.4 v3 l9 1.4 v1.6 l-8 0.4 l-0.3 5.5 l1.2 11.3 h-2.3 l-0.9 -9 l-0.9 9 h-2.3 l1.2 -11.3 l-0.3 -5.5 l-8.5 -0.4 v-1.6 l9.7 -1.4 Z" fill="#b4e4ea" stroke="#3c7480" stroke-width="0.8"/><path d="M19.5 577 v7 M18.6 586 l-0.6 8 M20.6 586 l0.6 8" stroke="#4a8490" stroke-width="0.7"/><path d="M9.5 609 L20 605 L21 624 L12.5 628 Z" fill="#b4e4ea" stroke="#1e3c44" stroke-width="1"/><path d="M20 605 L28.5 608.5 L29 621 L21 624 Z" fill="#7cc0cc" stroke="#1e3c44" stroke-width="1"/><circle cx="14" cy="613" r="0.9" fill="#234"/><circle cx="16" cy="621" r="0.9" fill="#234"/><circle cx="25" cy="612" r="0.9" fill="#234"/><circle cx="25" cy="619" r="0.9" fill="#234"/><path d="M10.4 645 L17.5 649.5 L13.8 655.6 L7.2 650 Z" fill="#4f7b86" stroke="#2c4a52" stroke-width="0.8"/><path d="M10.4 645 L12.3 646.2 L9 651.5 L7.2 650 Z" fill="#f8fcfd"/><path d="M21.5 640.6 L28.5 639.3 L30.7 647 L24 649.5 Z" fill="#4f7b86" stroke="#2c4a52" stroke-width="0.8"/><path d="M21.5 640.6 L28.5 639.3 L29.4 642.6 L22.5 644.2 Z" fill="#f8fcfd"/><path d="M17.5 648 L21.5 644.5" stroke="#1e3c44" stroke-width="1.2" stroke-dasharray="2 1"/><path d="M12.3 667.5 L14.8 666.5 L15.2 684 L12.6 685 Z M17.6 666.8 L19.8 666 L20.2 683 L18 684 Z" fill="#b4e4ea" stroke="#4a8894" stroke-width="0.8"/><path d="M10.6 683.7 L16.5 680.4 L21 679 L27.6 684" fill="none" stroke="#5a9aa6" stroke-width="2"/><path d="M10.6 683.7 L16.5 680.4 L21 679 L27.6 684" fill="none" stroke="#dff4f8" stroke-width="0.6"/></svg>
<div style="left:842px;top:85px;width:182px;height:603px;background:#c5c5c5;"></div>
<div style="left:842px;top:88px;width:29px;height:25px;background:#c5c5c5;"></div>
<div style="left:843px;top:88px;width:27px;height:1px;background:#e6e6e6;"></div>
<div style="left:842px;top:89px;width:1px;height:24px;background:#e6e6e6;"></div>
<div style="left:870px;top:89px;width:1px;height:24px;background:#8c8c8c;"></div>
<div style="left:843px;top:112px;width:27px;height:1px;background:#e0e0e0;"></div>
<div style="left:871px;top:87px;width:29px;height:26px;background:#c5c5c5;"></div>
<div style="left:872px;top:87px;width:27px;height:1px;background:#e6e6e6;"></div>
<div style="left:871px;top:88px;width:1px;height:25px;background:#e6e6e6;"></div>
<div style="left:899px;top:88px;width:1px;height:25px;background:#8c8c8c;"></div>
<div style="left:900px;top:88px;width:29px;height:25px;background:#c5c5c5;"></div>
<div style="left:901px;top:88px;width:27px;height:1px;background:#e6e6e6;"></div>
<div style="left:900px;top:89px;width:1px;height:24px;background:#e6e6e6;"></div>
<div style="left:928px;top:89px;width:1px;height:24px;background:#8c8c8c;"></div>
<div style="left:901px;top:112px;width:27px;height:1px;background:#e0e0e0;"></div>
<div style="left:929px;top:88px;width:29px;height:25px;background:#c5c5c5;"></div>
<div style="left:930px;top:88px;width:27px;height:1px;background:#e6e6e6;"></div>
<div style="left:929px;top:89px;width:1px;height:24px;background:#e6e6e6;"></div>
<div style="left:957px;top:89px;width:1px;height:24px;background:#8c8c8c;"></div>
<div style="left:930px;top:112px;width:27px;height:1px;background:#e0e0e0;"></div>
<div style="left:958px;top:88px;width:29px;height:25px;background:#c5c5c5;"></div>
<div style="left:959px;top:88px;width:27px;height:1px;background:#e6e6e6;"></div>
<div style="left:958px;top:89px;width:1px;height:24px;background:#e6e6e6;"></div>
<div style="left:986px;top:89px;width:1px;height:24px;background:#8c8c8c;"></div>
<div style="left:959px;top:112px;width:27px;height:1px;background:#e0e0e0;"></div>
<div style="left:987px;top:88px;width:29px;height:25px;background:#c5c5c5;"></div>
<div style="left:988px;top:88px;width:27px;height:1px;background:#e6e6e6;"></div>
<div style="left:987px;top:89px;width:1px;height:24px;background:#e6e6e6;"></div>
<div style="left:1015px;top:89px;width:1px;height:24px;background:#8c8c8c;"></div>
<div style="left:988px;top:112px;width:27px;height:1px;background:#e0e0e0;"></div>
<svg style="left:0px;top:0px;" width="1024" height="738" viewBox="0 0 1024 738"><path transform="translate(855.2 96.4) rotate(-22) scale(0.68)" d="M0 0 V15.5 L3.4 12.6 L6.2 19.6 L8.8 18.6 L6 11.8 L10.6 11.6 Z" fill="#f8f8f8" stroke="#333" stroke-width="1.2"/><path d="M853 90 V100 M848 95 H858 M849.5 91.5 L856.5 98.5 M856.5 91.5 L849.5 98.5" stroke="#fffbe6" stroke-width="1"/><circle cx="853" cy="95" r="2.2" fill="#ffffff"/><path d="M877.5 91.5 H894.5 V108" fill="none" stroke="#8a8a8a" stroke-width="0.6" stroke-dasharray="1 1"/><path d="M881.0500000000001 108.2 A13.55 13.55 0 0 1 894.6 94.65" fill="none" stroke="#1a2034" stroke-width="7.5"/><path d="M880.30000000001 108.2 A14.3 14.3 0 0 1 894.6 93.9" fill="none" stroke="#5c6e98" stroke-width="4.4"/><path d="M879.7 108.2 A14.9 14.9 0 0 1 894.6 93.3" fill="none" stroke="#c0cce4" stroke-width="1.5"/><path d="M883.0 108.2 A11.6 11.6 0 0 1 894.6 96.600000000001" fill="none" stroke="#46547c" stroke-width="1.4"/><rect x="876.5" y="90.7" width="1.6" height="1.6" fill="#111"/><rect x="893.7" y="107.4" width="1.6" height="1.6" fill="#111"/><rect x="910.5" y="90.5" width="7" height="6" fill="#dfe3f2" stroke="#48487a" stroke-width="1"/><path d="M914 97 V100 M914 100 L908.5 105 M914 100 L920 105 M914 100 V105" stroke="#222" stroke-width="1"/><rect x="905.5" y="104.5" width="4" height="4" fill="#f4f4fa" stroke="#48487a" stroke-width="1"/><rect x="912" y="104.5" width="4" height="4" fill="#f4f4fa" stroke="#48487a" stroke-width="1"/><rect x="918.5" y="104.5" width="4" height="4" fill="#f4f4fa" stroke="#48487a" stroke-width="1"/><circle cx="946" cy="100" r="7.2" fill="#d8d8d8" stroke="#222" stroke-width="1.6"/><circle cx="946" cy="100" r="4.5" fill="#f0f0f0" stroke="#444" stroke-width="0.8"/><path d="M946 95.5 V104.5 M941.5 100 H950.5 M943 97 L949 103 M949 97 L943 103" stroke="#555" stroke-width="0.7"/><circle cx="946" cy="100" r="1.3" fill="#d02020"/><path d="M936.5 94 Q934 100 936.5 106 M939 93 Q936.5 100 939 107" fill="none" stroke="#555" stroke-width="0.9"/><rect x="964.3" y="91.3" width="18.4" height="14.4" rx="1.8" fill="#fdfdfd" stroke="#262626" stroke-width="2.2"/><rect x="968.5" y="94.5" width="3.5" height="7.5" rx="1.2" fill="#c8d4f0" stroke="#2038a0" stroke-width="0.9"/><path d="M975.5 94.5 L979.5 102.5 H972 Z" fill="#e02020"/><path d="M967 108.6 H980" stroke="#262626" stroke-width="2"/><rect x="971.5" y="106.6" width="4" height="1.2" fill="#262626"/><rect x="972.5" y="107" width="2.5" height="1.3" fill="#20c020"/><path d="M993.8 95.2 Q994.5 90.8 999.5 90.3 L1006 90.3 L1006.8 89.8 H1009.2 V95 H1006.8 L1006 94.3 H1003.5 L1000 94.3 Q996.5 93.8 993.8 95.2 Z" fill="#4a4a4e" stroke="#1c1c1c" stroke-width="0.7"/><path d="M996 92.5 Q998 91.2 1001 91.2 H1006" fill="none" stroke="#b4b4b8" stroke-width="0.9"/><path d="M1000 94.3 H1003.6 L1003.8 103 L1004.2 109.3 H999.4 L999.8 103 Z" fill="#c83c22" stroke="#4a1408" stroke-width="0.6"/><path d="M999.8 102.5 H1003.8 L1004.2 109.3 H999.4 Z" fill="#1e1e1e"/><path d="M1001.8 95 V102" stroke="#f08a70" stroke-width="0.8"/></svg>
<div style="left:849px;top:118px;width:146px;height:19px;background:#e1e1e1;"></div>
<div style="left:849px;top:118px;width:146px;height:1px;background:#1a1a1a;"></div>
<div style="left:849px;top:118px;width:1px;height:19px;background:#1a1a1a;"></div>
<div style="left:849px;top:136px;width:146px;height:1px;background:#f0f0f0;"></div>
<div style="left:994px;top:118px;width:1px;height:19px;background:#f0f0f0;"></div>
<div style="left:850px;top:119px;width:144px;height:1px;background:#6a6a6a;"></div>
<div style="left:850px;top:119px;width:1px;height:17px;background:#6a6a6a;"></div>
<span id="t20" style="left:852.5px;top:121.0px;line-height:14px;font-size:11px;color:#000;letter-spacing:-0.482px;">Circle01</span>
<div style="left:998px;top:118px;width:17px;height:19px;background:#5585e0;"></div>
<div style="left:998px;top:118px;width:17px;height:1px;background:#7a7a7a;"></div>
<div style="left:998px;top:118px;width:1px;height:19px;background:#7a7a7a;"></div>
<div style="left:998px;top:136px;width:17px;height:1px;background:#f0f0f0;"></div>
<div style="left:1014px;top:118px;width:1px;height:19px;background:#f0f0f0;"></div>
<div style="left:849px;top:143px;width:166px;height:24px;background:#e1e1e1;"></div>
<div style="left:849px;top:143px;width:166px;height:1px;background:#5c6066;"></div>
<div style="left:849px;top:143px;width:1px;height:24px;background:#5c6066;"></div>
<div style="left:849px;top:166px;width:166px;height:1px;background:#ececec;"></div>
<div style="left:1014px;top:143px;width:1px;height:24px;background:#ececec;"></div>
<div style="left:850px;top:144px;width:164px;height:1px;background:#72767c;"></div>
<div style="left:850px;top:144px;width:1px;height:22px;background:#72767c;"></div>
<div style="left:998px;top:145px;width:16px;height:20px;background:#ece9d8;"></div>
<div style="left:998px;top:145px;width:16px;height:1px;background:#ffffff;"></div>
<div style="left:998px;top:145px;width:1px;height:20px;background:#ffffff;"></div>
<div style="left:998px;top:164px;width:16px;height:1px;background:#7a7868;"></div>
<div style="left:1013px;top:145px;width:1px;height:20px;background:#7a7868;"></div>
<svg style="left:1002px;top:154px;" width="8" height="4" viewBox="0 0 8 4"><path d="M0 0 H7 L3.5 3.5 Z" fill="#000"/></svg>
<span id="t21" style="left:853.2px;top:148.2px;line-height:14px;font-size:11px;color:#000;letter-spacing:-0.254px;">Modifier List</span>
<div style="left:850px;top:171px;width:164px;height:127px;background:#e1e1e1;"></div>
<div style="left:850px;top:171px;width:164px;height:1px;background:#5a5a5a;"></div>
<div style="left:850px;top:171px;width:1px;height:127px;background:#5a5a5a;"></div>
<div style="left:850px;top:297px;width:164px;height:1px;background:#ffffff;"></div>
<div style="left:1013px;top:171px;width:1px;height:127px;background:#ffffff;"></div>
<div style="left:851px;top:172px;width:162px;height:1px;background:#9a9a9a;"></div>
<div style="left:851px;top:172px;width:1px;height:125px;background:#9a9a9a;"></div>
<div style="left:852px;top:189px;width:160px;height:16px;background:#fff200;"></div>
<div style="left:852px;top:236px;width:160px;height:1px;background:#7a7a7a;"></div>
<svg style="left:855px;top:174px;shape-rendering:crispEdges;" width="30" height="64" viewBox="0 0 30 64"><rect x="2.5" y="2.5" width="8" height="8" fill="none" stroke="#111" stroke-width="1"/><rect x="4" y="6" width="5" height="1" fill="#111"/><rect x="6" y="11" width="1" height="1" fill="#111"/><rect x="6" y="13" width="1" height="1" fill="#111"/><rect x="6" y="15" width="1" height="1" fill="#111"/><rect x="6" y="17" width="1" height="1" fill="#111"/><rect x="6" y="19" width="1" height="1" fill="#111"/><rect x="6" y="21" width="1" height="1" fill="#111"/><rect x="6" y="23" width="1" height="1" fill="#111"/><rect x="6" y="25" width="1" height="1" fill="#111"/><rect x="6" y="27" width="1" height="1" fill="#111"/><rect x="6" y="29" width="1" height="1" fill="#111"/><rect x="6" y="31" width="1" height="1" fill="#111"/><rect x="6" y="33" width="1" height="1" fill="#111"/><rect x="6" y="35" width="1" height="1" fill="#111"/><rect x="6" y="37" width="1" height="1" fill="#111"/><rect x="6" y="39" width="1" height="1" fill="#111"/><rect x="6" y="41" width="1" height="1" fill="#111"/><rect x="6" y="43" width="1" height="1" fill="#111"/><rect x="6" y="45" width="1" height="1" fill="#111"/><rect x="6" y="47" width="1" height="1" fill="#111"/><rect x="6" y="49" width="1" height="1" fill="#111"/><rect x="6" y="51" width="1" height="1" fill="#111"/><rect x="6" y="53" width="1" height="1" fill="#111"/><rect x="7" y="22" width="1" height="1" fill="#111"/><rect x="9" y="22" width="1" height="1" fill="#111"/><rect x="11" y="22" width="1" height="1" fill="#111"/><rect x="13" y="22" width="1" height="1" fill="#111"/><rect x="15" y="22" width="1" height="1" fill="#111"/><rect x="17" y="22" width="1" height="1" fill="#111"/><rect x="19" y="22" width="1" height="1" fill="#111"/><rect x="21" y="22" width="1" height="1" fill="#111"/><rect x="7" y="38" width="1" height="1" fill="#111"/><rect x="9" y="38" width="1" height="1" fill="#111"/><rect x="11" y="38" width="1" height="1" fill="#111"/><rect x="13" y="38" width="1" height="1" fill="#111"/><rect x="15" y="38" width="1" height="1" fill="#111"/><rect x="17" y="38" width="1" height="1" fill="#111"/><rect x="19" y="38" width="1" height="1" fill="#111"/><rect x="21" y="38" width="1" height="1" fill="#111"/><rect x="7" y="54" width="1" height="1" fill="#111"/><rect x="9" y="54" width="1" height="1" fill="#111"/><rect x="11" y="54" width="1" height="1" fill="#111"/><rect x="13" y="54" width="1" height="1" fill="#111"/><rect x="15" y="54" width="1" height="1" fill="#111"/><rect x="17" y="54" width="1" height="1" fill="#111"/><rect x="19" y="54" width="1" height="1" fill="#111"/><rect x="21" y="54" width="1" height="1" fill="#111"/></svg>
<span id="t22" style="left:873px;top:174.0px;line-height:14px;font-size:11px;color:#000;letter-spacing:-0.226px;">Editable Spline</span>
<span id="t23" style="left:882.5px;top:190.0px;line-height:14px;font-size:11px;color:#000;letter-spacing:-0.031px;">Vertex</span>
<span id="t24" style="left:883px;top:206.0px;line-height:14px;font-size:11px;color:#000;letter-spacing:-0.290px;">Segment</span>
<span id="t25" style="left:883px;top:221.5px;line-height:14px;font-size:11px;color:#000;letter-spacing:-0.263px;">Spline</span>
<svg style="left:0px;top:0px;shape-rendering:crispEdges;" width="1024" height="738" viewBox="0 0 1024 738"><path d="M993.0 177.5 h3 M994.5 176.0 v3" stroke="#000" stroke-width="1"/><path d="M1001.0 177.5 h3 M1002.5 176.0 v3" stroke="#000" stroke-width="1"/><path d="M995.0 183.5 h3 M996.5 182.0 v3" stroke="#000" stroke-width="1"/><path d="M1004.0 183.5 h3 M1005.5 182.0 v3" stroke="#000" stroke-width="1"/><path d="M993.0 193.5 h3 M994.5 192.0 v3" stroke="#000" stroke-width="1"/><path d="M1001.0 193.5 h3 M1002.5 192.0 v3" stroke="#000" stroke-width="1"/><path d="M995.0 199.5 h3 M996.5 198.0 v3" stroke="#000" stroke-width="1"/><path d="M1004.0 199.5 h3 M1005.5 198.0 v3" stroke="#000" stroke-width="1"/></svg>
<svg style="left:0px;top:0px;" width="1024" height="738" viewBox="0 0 1024 738"><path d="M856 313.5 H862" stroke="#000" stroke-width="1.4"/><path d="M862 308.5 H864 L866 310.5 H869 L869.5 309 H871.5 V318 H869.5 L869 316.5 H866 L864 318.5 H862 Z" fill="#000"/><path d="M864 310.5 L865.5 312 V315 L864 316.5 Z M867 312 H868.5 V315 H867 Z" fill="#f4f4f4"/><path d="M897.5 308 V320 M903.5 308 V320" stroke="#111" stroke-width="1.3"/><rect x="898" y="312" width="5" height="8" fill="#fff"/><rect x="898" y="308" width="5" height="4" fill="#999"/><path d="M929.5 308 L936 319 L942.5 308 M933 313 L936 317 L939 313" fill="none" stroke="#a4a4a4" stroke-width="1"/><circle cx="936" cy="319.5" r="1.5" fill="none" stroke="#a4a4a4" stroke-width="0.8"/><path d="M955.5 311.5 V318 Q960 321 964 318 V311.5" fill="#f4f4f4" stroke="#111" stroke-width="1.3"/><ellipse cx="959.8" cy="311.5" rx="4.3" ry="2" fill="#e8e8e8" stroke="#111" stroke-width="1.2"/><path d="M957 310 Q959 306.5 963 309" fill="none" stroke="#111" stroke-width="1.2"/><rect x="989.5" y="307.5" width="11" height="12" fill="#fff" stroke="#2030b0" stroke-width="1.3"/><rect x="989" y="307" width="12" height="3" fill="#2030b0"/><g fill="#c8c8d8" stroke="#333" stroke-width="0.8"><rect x="993.5" y="312.5" width="4" height="3"/><rect x="999" y="312.5" width="4" height="3"/><rect x="993.5" y="317" width="4" height="3"/><rect x="999" y="317" width="4" height="3"/></g></svg>
<div style="left:882px;top:305px;width:1px;height:16px;background:#7a7a7a;"></div>
<div style="left:883px;top:305px;width:1px;height:16px;background:#ececec;"></div>
<div style="left:918px;top:305px;width:1px;height:16px;background:#7a7a7a;"></div>
<div style="left:919px;top:305px;width:1px;height:16px;background:#ececec;"></div>
<div style="left:978px;top:305px;width:1px;height:16px;background:#7a7a7a;"></div>
<div style="left:979px;top:305px;width:1px;height:16px;background:#ececec;"></div>
<div style="left:845px;top:335px;width:174px;height:2px;background:#f0f0f0;"></div>
<div style="left:845px;top:337px;width:174px;height:2px;background:#0a0a0a;"></div>
<div style="left:844px;top:346px;width:1px;height:335px;background:#7f7f7f;"></div>
<div style="left:844px;top:346px;width:175px;height:1px;background:#7f7f7f;"></div>
<div style="left:845px;top:681px;width:174px;height:1px;background:#ececec;"></div>
<div style="left:840px;top:687px;width:184px;height:1px;background:#7f7f7f;"></div>
<div style="left:847px;top:399px;width:1px;height:282px;background:#7f7f7f;"></div>
<div style="left:848px;top:399px;width:1px;height:282px;background:#f4f4f4;"></div>
<div style="left:1010px;top:399px;width:1px;height:282px;background:#7f7f7f;"></div>
<div style="left:1011px;top:399px;width:1px;height:282px;background:#f4f4f4;"></div>
<div style="left:847px;top:680px;width:165px;height:1px;background:#7f7f7f;"></div>
<div style="left:1014px;top:347px;width:4px;height:80px;background:#808080;"></div>
<div style="left:1014px;top:427px;width:4px;height:254px;background:#000000;"></div>
<div style="left:1018px;top:346px;width:1px;height:336px;background:#f4f4f4;"></div>
<div style="left:851px;top:351px;width:158px;height:16px;background:#b5b5b5;"></div>
<div style="left:851px;top:351px;width:158px;height:1px;background:#000;"></div>
<div style="left:851px;top:366px;width:158px;height:1px;background:#000;"></div>
<div style="left:851px;top:351px;width:1px;height:16px;background:#000;"></div>
<div style="left:1008px;top:351px;width:1px;height:16px;background:#000;"></div>
<span id="t26" style="left:906.5px;top:352.0px;line-height:14px;font-size:11px;color:#000;letter-spacing:-0.196px;">Rendering</span>
<div style="left:857px;top:358px;width:6px;height:2px;background:#000;"></div>
<div style="left:859px;top:356px;width:2px;height:7px;background:#000;"></div>
<div style="left:847px;top:355px;width:1px;height:10px;background:#7f7f7f;"></div>
<div style="left:847px;top:355px;width:3px;height:1px;background:#7f7f7f;"></div>
<div style="left:848px;top:356px;width:2px;height:9px;background:#f4f4f4;"></div>
<div style="left:1011px;top:355px;width:1px;height:10px;background:#7f7f7f;"></div>
<div style="left:1010px;top:355px;width:2px;height:1px;background:#7f7f7f;"></div>
<div style="left:1012px;top:356px;width:1px;height:9px;background:#f4f4f4;"></div>
<div style="left:1010px;top:364px;width:2px;height:1px;background:#7f7f7f;"></div>
<div style="left:851px;top:371px;width:158px;height:16px;background:#b5b5b5;"></div>
<div style="left:851px;top:371px;width:158px;height:1px;background:#000;"></div>
<div style="left:851px;top:386px;width:158px;height:1px;background:#000;"></div>
<div style="left:851px;top:371px;width:1px;height:16px;background:#000;"></div>
<div style="left:1008px;top:371px;width:1px;height:16px;background:#000;"></div>
<span id="t27" style="left:901.5px;top:372.0px;line-height:14px;font-size:11px;color:#000;letter-spacing:-0.196px;">Interpolation</span>
<div style="left:857px;top:378px;width:6px;height:2px;background:#000;"></div>
<div style="left:859px;top:376px;width:2px;height:7px;background:#000;"></div>
<div style="left:847px;top:375px;width:1px;height:10px;background:#7f7f7f;"></div>
<div style="left:847px;top:375px;width:3px;height:1px;background:#7f7f7f;"></div>
<div style="left:848px;top:376px;width:2px;height:9px;background:#f4f4f4;"></div>
<div style="left:1011px;top:375px;width:1px;height:10px;background:#7f7f7f;"></div>
<div style="left:1010px;top:375px;width:2px;height:1px;background:#7f7f7f;"></div>
<div style="left:1012px;top:376px;width:1px;height:9px;background:#f4f4f4;"></div>
<div style="left:1010px;top:384px;width:2px;height:1px;background:#7f7f7f;"></div>
<div style="left:851px;top:391px;width:158px;height:16px;background:#b5b5b5;"></div>
<div style="left:851px;top:391px;width:158px;height:1px;background:#000;"></div>
<div style="left:851px;top:406px;width:158px;height:1px;background:#000;"></div>
<div style="left:851px;top:391px;width:1px;height:16px;background:#000;"></div>
<div style="left:1008px;top:391px;width:1px;height:16px;background:#000;"></div>
<span id="t28" style="left:908.5px;top:392.0px;line-height:14px;font-size:11px;color:#000;letter-spacing:-0.141px;">Selection</span>
<div style="left:858px;top:399px;width:4px;height:1px;background:#000;"></div>
<div style="left:894px;top:415px;width:23px;height:23px;background:#fff200;"></div>
<div style="left:894px;top:415px;width:23px;height:1px;background:#6a6a6a;"></div>
<div style="left:894px;top:415px;width:1px;height:23px;background:#6a6a6a;"></div>
<div style="left:894px;top:437px;width:23px;height:1px;background:#f8f8f8;"></div>
<div style="left:916px;top:415px;width:1px;height:23px;background:#f8f8f8;"></div>
<svg style="left:0px;top:0px;" width="1024" height="738" viewBox="0 0 1024 738"><path d="M897.0 424.5 h3 M898.5 423.0 v3" stroke="#e00000" stroke-width="1"/><path d="M908.0 424.5 h3 M909.5 423.0 v3" stroke="#e00000" stroke-width="1"/><path d="M902.0 430.5 h3 M903.5 429.0 v3" stroke="#e00000" stroke-width="1"/><path d="M914.0 430.5 h3 M915.5 429.0 v3" stroke="#e00000" stroke-width="1"/><path d="M922 425 l4 3.5" stroke="#e00000" stroke-width="1" stroke-dasharray="1 1"/><path d="M926.5 429 l6 -5.5" stroke="#e00000" stroke-width="1.8"/><path d="M933 424 l6 5.5" stroke="#e00000" stroke-width="1" stroke-dasharray="1 1"/><path d="M946.5 426.5 L951 430 L956.5 423.5 L962.5 430" fill="none" stroke="#e00000" stroke-width="1.8"/></svg>
<div style="left:854px;top:450px;width:152px;height:32px;border:1px solid #7f7f7f;box-sizing:border-box;"></div>
<div style="left:855px;top:451px;width:151px;height:31px;border:1px solid #f4f4f4;border-right:none;border-bottom:none;box-sizing:border-box;"></div>
<div style="left:854px;top:482px;width:153px;height:1px;background:#f4f4f4;"></div>
<div style="left:1006px;top:450px;width:1px;height:33px;background:#f4f4f4;"></div>
<div style="left:860.8px;top:448px;width:92.5px;height:5px;background:#c5c5c5;"></div>
<span id="t29" style="left:862.8px;top:443.5px;line-height:14px;font-size:11px;color:#000;letter-spacing:-0.284px;">Named Selections:</span>
<div style="left:872px;top:459px;width:56px;height:18px;background:#c5c5c5;"></div>
<div style="left:872px;top:459px;width:56px;height:1px;background:#ffffff;"></div>
<div style="left:872px;top:459px;width:1px;height:18px;background:#ffffff;"></div>
<div style="left:872px;top:476px;width:56px;height:1px;background:#6f6f6f;"></div>
<div style="left:927px;top:459px;width:1px;height:18px;background:#6f6f6f;"></div>
<span id="t30" style="left:888.5px;top:460.5px;line-height:14px;font-size:11px;color:#000;letter-spacing:-0.297px;">Copy</span>
<div style="left:938px;top:459px;width:56px;height:18px;background:#c5c5c5;"></div>
<div style="left:938px;top:459px;width:56px;height:1px;background:#ffffff;"></div>
<div style="left:938px;top:459px;width:1px;height:18px;background:#ffffff;"></div>
<div style="left:938px;top:476px;width:56px;height:1px;background:#6f6f6f;"></div>
<div style="left:993px;top:459px;width:1px;height:18px;background:#6f6f6f;"></div>
<span id="t31" style="left:952px;top:460.5px;line-height:14px;font-size:11px;color:#7a7a7a;letter-spacing:0.072px;">Paste</span>
<div style="left:854px;top:489px;width:152px;height:100px;border:1px solid #7f7f7f;box-sizing:border-box;"></div>
<div style="left:855px;top:490px;width:151px;height:99px;border:1px solid #f4f4f4;border-right:none;border-bottom:none;box-sizing:border-box;"></div>
<div style="left:854px;top:589px;width:153px;height:1px;background:#f4f4f4;"></div>
<div style="left:1006px;top:489px;width:1px;height:101px;background:#f4f4f4;"></div>
<div style="left:872px;top:497px;width:13px;height:13px;background:#c5c5c5;"></div>
<div style="left:872px;top:497px;width:13px;height:1px;background:#6f6f6f;"></div>
<div style="left:872px;top:497px;width:1px;height:13px;background:#6f6f6f;"></div>
<div style="left:872px;top:509px;width:13px;height:1px;background:#ffffff;"></div>
<div style="left:884px;top:497px;width:1px;height:13px;background:#ffffff;"></div>
<div style="left:873px;top:498px;width:11px;height:1px;background:#9a9a9a;"></div>
<div style="left:873px;top:498px;width:1px;height:11px;background:#9a9a9a;"></div>
<span id="t32" style="left:890.5px;top:496.5px;line-height:14px;font-size:11px;color:#000;letter-spacing:-0.055px;">Lock Handles</span>
<svg style="left:877.5px;top:511.5px;" width="14" height="14" viewBox="0 0 14 14"><circle cx="7" cy="7" r="5.5" fill="#e4e4e4"/><path d="M3.1 10.9 A5.5 5.5 0 0 1 10.9 3.1" fill="none" stroke="#6a6a6a" stroke-width="1.2"/><path d="M10.9 3.1 A5.5 5.5 0 0 1 3.1 10.9" fill="none" stroke="#fafafa" stroke-width="1.2"/><circle cx="7" cy="7" r="2.400" fill="#000"/></svg>
<span id="t33" style="left:896px;top:511.5px;line-height:14px;font-size:11px;color:#000;letter-spacing:0.031px;">Alike</span>
<svg style="left:934.5px;top:511.5px;" width="14" height="14" viewBox="0 0 14 14"><circle cx="7" cy="7" r="5.5" fill="#e4e4e4"/><path d="M3.1 10.9 A5.5 5.5 0 0 1 10.9 3.1" fill="none" stroke="#6a6a6a" stroke-width="1.2"/><path d="M10.9 3.1 A5.5 5.5 0 0 1 3.1 10.9" fill="none" stroke="#fafafa" stroke-width="1.2"/></svg>
<span id="t34" style="left:953px;top:511.5px;line-height:14px;font-size:11px;color:#000;letter-spacing:-0.245px;">All</span>
<div style="left:861px;top:532px;width:13px;height:13px;background:#c5c5c5;"></div>
<div style="left:861px;top:532px;width:13px;height:1px;background:#6f6f6f;"></div>
<div style="left:861px;top:532px;width:1px;height:13px;background:#6f6f6f;"></div>
<div style="left:861px;top:544px;width:13px;height:1px;background:#ffffff;"></div>
<div style="left:873px;top:532px;width:1px;height:13px;background:#ffffff;"></div>
<div style="left:862px;top:533px;width:11px;height:1px;background:#9a9a9a;"></div>
<div style="left:862px;top:533px;width:1px;height:11px;background:#9a9a9a;"></div>
<span id="t35" style="left:878.5px;top:531.5px;line-height:14px;font-size:11px;color:#000;letter-spacing:-0.174px;">Area Selection:</span>
<div style="left:953px;top:531px;width:35px;height:15px;background:#e1e1e1;"></div>
<div style="left:953px;top:531px;width:35px;height:1px;background:#3a3a3a;"></div>
<div style="left:953px;top:531px;width:1px;height:15px;background:#3a3a3a;"></div>
<div style="left:953px;top:545px;width:35px;height:1px;background:#ffffff;"></div>
<div style="left:987px;top:531px;width:1px;height:15px;background:#ffffff;"></div>
<div style="left:954px;top:532px;width:33px;height:1px;background:#8a8a8a;"></div>
<div style="left:954px;top:532px;width:1px;height:13px;background:#8a8a8a;"></div>
<span id="t36" style="left:957px;top:531.5px;line-height:14px;font-size:11px;color:#000;letter-spacing:-0.266px;">0,1</span>
<div style="left:990px;top:531px;width:10px;height:7px;background:#c5c5c5;"></div>
<div style="left:990px;top:531px;width:10px;height:1px;background:#ffffff;"></div>
<div style="left:990px;top:531px;width:1px;height:7px;background:#ffffff;"></div>
<div style="left:990px;top:537px;width:10px;height:1px;background:#7a7a7a;"></div>
<div style="left:999px;top:531px;width:1px;height:7px;background:#7a7a7a;"></div>
<div style="left:990px;top:538px;width:10px;height:8px;background:#c5c5c5;"></div>
<div style="left:990px;top:538px;width:10px;height:1px;background:#ffffff;"></div>
<div style="left:990px;top:538px;width:1px;height:8px;background:#ffffff;"></div>
<div style="left:990px;top:545px;width:10px;height:1px;background:#7a7a7a;"></div>
<div style="left:999px;top:538px;width:1px;height:8px;background:#7a7a7a;"></div>
<svg style="left:992px;top:533px;" width="6" height="11" viewBox="0 0 6 11"><path d="M0.5 3.5 H5.5 L3 0.5 Z M0.5 7.5 H5.5 L3 10.5 Z" fill="#000"/></svg>
<div style="left:861px;top:549px;width:13px;height:13px;background:#c5c5c5;"></div>
<div style="left:861px;top:549px;width:13px;height:1px;background:#6f6f6f;"></div>
<div style="left:861px;top:549px;width:1px;height:13px;background:#6f6f6f;"></div>
<div style="left:861px;top:561px;width:13px;height:1px;background:#ffffff;"></div>
<div style="left:873px;top:549px;width:1px;height:13px;background:#ffffff;"></div>
<div style="left:862px;top:550px;width:11px;height:1px;background:#9a9a9a;"></div>
<div style="left:862px;top:550px;width:1px;height:11px;background:#9a9a9a;"></div>
<span id="t37" style="left:879.5px;top:548.5px;line-height:14px;font-size:11px;color:#000;letter-spacing:-0.287px;">Segment End</span>
<div style="left:891px;top:566px;width:75px;height:19px;background:#c5c5c5;"></div>
<div style="left:891px;top:566px;width:75px;height:1px;background:#ffffff;"></div>
<div style="left:891px;top:566px;width:1px;height:19px;background:#ffffff;"></div>
<div style="left:891px;top:584px;width:75px;height:1px;background:#6f6f6f;"></div>
<div style="left:965px;top:566px;width:1px;height:19px;background:#6f6f6f;"></div>
<span id="t38" style="left:900.5px;top:568.0px;line-height:14px;font-size:11px;color:#000;letter-spacing:-0.111px;">Select By...</span>
<div style="left:854px;top:598px;width:152px;height:43px;border:1px solid #7f7f7f;box-sizing:border-box;"></div>
<div style="left:855px;top:599px;width:151px;height:42px;border:1px solid #f4f4f4;border-right:none;border-bottom:none;box-sizing:border-box;"></div>
<div style="left:854px;top:641px;width:153px;height:1px;background:#f4f4f4;"></div>
<div style="left:1006px;top:598px;width:1px;height:44px;background:#f4f4f4;"></div>
<div style="left:861.5px;top:596px;width:38.5px;height:5px;background:#c5c5c5;"></div>
<span id="t39" style="left:863.5px;top:591.5px;line-height:14px;font-size:11px;color:#000;letter-spacing:-0.368px;">Display</span>
<div style="left:872px;top:608px;width:13px;height:13px;background:#c5c5c5;"></div>
<div style="left:872px;top:608px;width:13px;height:1px;background:#6f6f6f;"></div>
<div style="left:872px;top:608px;width:1px;height:13px;background:#6f6f6f;"></div>
<div style="left:872px;top:620px;width:13px;height:1px;background:#ffffff;"></div>
<div style="left:884px;top:608px;width:1px;height:13px;background:#ffffff;"></div>
<div style="left:873px;top:609px;width:11px;height:1px;background:#9a9a9a;"></div>
<div style="left:873px;top:609px;width:1px;height:11px;background:#9a9a9a;"></div>
<span id="t40" style="left:890.5px;top:607.5px;line-height:14px;font-size:11px;color:#000;letter-spacing:-0.234px;">Show Vertex Numbers</span>
<div style="left:901px;top:623px;width:13px;height:13px;background:#c5c5c5;"></div>
<div style="left:901px;top:623px;width:13px;height:1px;background:#6f6f6f;"></div>
<div style="left:901px;top:623px;width:1px;height:13px;background:#6f6f6f;"></div>
<div style="left:901px;top:635px;width:13px;height:1px;background:#ffffff;"></div>
<div style="left:913px;top:623px;width:1px;height:13px;background:#ffffff;"></div>
<div style="left:902px;top:624px;width:11px;height:1px;background:#9a9a9a;"></div>
<div style="left:902px;top:624px;width:1px;height:11px;background:#9a9a9a;"></div>
<span id="t41" style="left:920.5px;top:622.5px;line-height:14px;font-size:11px;color:#7f7f7f;letter-spacing:-0.191px;">Selected Only</span>
<span id="t42" style="left:889.5px;top:648.0px;line-height:14px;font-size:11px;color:#000;letter-spacing:-0.059px;">Spline 1/Vert 2 Selected</span>
<div style="left:38px;top:643px;width:804px;height:45px;background:#c5c5c5;"></div>
<div style="left:41px;top:644px;width:15px;height:16px;background:#c5c5c5;"></div>
<div style="left:41px;top:644px;width:15px;height:1px;background:#ffffff;"></div>
<div style="left:41px;top:644px;width:1px;height:16px;background:#ffffff;"></div>
<div style="left:41px;top:659px;width:15px;height:1px;background:#8a8a8a;"></div>
<div style="left:55px;top:644px;width:1px;height:16px;background:#8a8a8a;"></div>
<div style="left:181px;top:644px;width:16px;height:16px;background:#c5c5c5;"></div>
<div style="left:181px;top:644px;width:16px;height:1px;background:#ffffff;"></div>
<div style="left:181px;top:644px;width:1px;height:16px;background:#ffffff;"></div>
<div style="left:181px;top:659px;width:16px;height:1px;background:#8a8a8a;"></div>
<div style="left:196px;top:644px;width:1px;height:16px;background:#8a8a8a;"></div>
<div style="left:56px;top:644px;width:125px;height:16px;background:#c5c5c5;"></div>
<div style="left:56px;top:644px;width:125px;height:1px;background:#f4f4f4;"></div>
<div style="left:56px;top:644px;width:1px;height:16px;background:#f4f4f4;"></div>
<div style="left:57px;top:658px;width:124px;height:2px;background:#111;"></div>
<div style="left:180px;top:644px;width:2px;height:16px;background:#111;"></div>
<svg style="left:45px;top:647px;" width="8" height="10" viewBox="0 0 8 10"><path d="M6 0.5 L1 5 L6 9.5" fill="none" stroke="#111" stroke-width="1.1"/></svg>
<svg style="left:185px;top:647px;" width="8" height="10" viewBox="0 0 8 10"><path d="M2 0.5 L7 5 L2 9.5" fill="none" stroke="#111" stroke-width="1.1"/></svg>
<span id="t43" style="left:101.3px;top:644.5px;line-height:14px;font-size:12.7px;color:#000;letter-spacing:-0.473px;">0 / 100</span>
<div style="left:40px;top:661px;width:800px;height:1px;background:#f0f0f0;"></div>
<div style="left:40px;top:662px;width:800px;height:1px;background:#9a9a9a;"></div>
<svg style="left:0px;top:0px;shape-rendering:crispEdges;" width="1024" height="738" viewBox="0 0 1024 738"><rect x="93" y="663" width="1" height="25" fill="#858585"/><rect x="100" y="663" width="1" height="11" fill="#858585"/><rect x="107" y="663" width="1" height="11" fill="#858585"/><rect x="114" y="663" width="1" height="11" fill="#858585"/><rect x="121" y="663" width="1" height="11" fill="#858585"/><rect x="128" y="663" width="1" height="11" fill="#858585"/><rect x="135" y="663" width="1" height="11" fill="#858585"/><rect x="141" y="663" width="1" height="11" fill="#858585"/><rect x="148" y="663" width="1" height="11" fill="#858585"/><rect x="155" y="663" width="1" height="11" fill="#858585"/><rect x="162" y="663" width="1" height="25" fill="#858585"/><rect x="169" y="663" width="1" height="11" fill="#858585"/><rect x="176" y="663" width="1" height="11" fill="#858585"/><rect x="183" y="663" width="1" height="11" fill="#858585"/><rect x="190" y="663" width="1" height="11" fill="#858585"/><rect x="197" y="663" width="1" height="11" fill="#858585"/><rect x="204" y="663" width="1" height="11" fill="#858585"/><rect x="211" y="663" width="1" height="11" fill="#858585"/><rect x="218" y="663" width="1" height="11" fill="#858585"/><rect x="225" y="663" width="1" height="11" fill="#858585"/><rect x="232" y="663" width="1" height="25" fill="#858585"/><rect x="239" y="663" width="1" height="11" fill="#858585"/><rect x="246" y="663" width="1" height="11" fill="#858585"/><rect x="253" y="663" width="1" height="11" fill="#858585"/><rect x="259" y="663" width="1" height="11" fill="#858585"/><rect x="266" y="663" width="1" height="11" fill="#858585"/><rect x="273" y="663" width="1" height="11" fill="#858585"/><rect x="280" y="663" width="1" height="11" fill="#858585"/><rect x="287" y="663" width="1" height="11" fill="#858585"/><rect x="294" y="663" width="1" height="11" fill="#858585"/><rect x="301" y="663" width="1" height="25" fill="#858585"/><rect x="308" y="663" width="1" height="11" fill="#858585"/><rect x="315" y="663" width="1" height="11" fill="#858585"/><rect x="322" y="663" width="1" height="11" fill="#858585"/><rect x="329" y="663" width="1" height="11" fill="#858585"/><rect x="336" y="663" width="1" height="11" fill="#858585"/><rect x="343" y="663" width="1" height="11" fill="#858585"/><rect x="350" y="663" width="1" height="11" fill="#858585"/><rect x="357" y="663" width="1" height="11" fill="#858585"/><rect x="364" y="663" width="1" height="11" fill="#858585"/><rect x="370" y="663" width="1" height="25" fill="#858585"/><rect x="377" y="663" width="1" height="11" fill="#858585"/><rect x="384" y="663" width="1" height="11" fill="#858585"/><rect x="391" y="663" width="1" height="11" fill="#858585"/><rect x="398" y="663" width="1" height="11" fill="#858585"/><rect x="405" y="663" width="1" height="11" fill="#858585"/><rect x="412" y="663" width="1" height="11" fill="#858585"/><rect x="419" y="663" width="1" height="11" fill="#858585"/><rect x="426" y="663" width="1" height="11" fill="#858585"/><rect x="433" y="663" width="1" height="11" fill="#858585"/><rect x="440" y="663" width="1" height="25" fill="#858585"/><rect x="447" y="663" width="1" height="11" fill="#858585"/><rect x="454" y="663" width="1" height="11" fill="#858585"/><rect x="461" y="663" width="1" height="11" fill="#858585"/><rect x="468" y="663" width="1" height="11" fill="#858585"/><rect x="475" y="663" width="1" height="11" fill="#858585"/><rect x="482" y="663" width="1" height="11" fill="#858585"/><rect x="488" y="663" width="1" height="11" fill="#858585"/><rect x="495" y="663" width="1" height="11" fill="#858585"/><rect x="502" y="663" width="1" height="11" fill="#858585"/><rect x="509" y="663" width="1" height="25" fill="#858585"/><rect x="516" y="663" width="1" height="11" fill="#858585"/><rect x="523" y="663" width="1" height="11" fill="#858585"/><rect x="530" y="663" width="1" height="11" fill="#858585"/><rect x="537" y="663" width="1" height="11" fill="#858585"/><rect x="544" y="663" width="1" height="11" fill="#858585"/><rect x="551" y="663" width="1" height="11" fill="#858585"/><rect x="558" y="663" width="1" height="11" fill="#858585"/><rect x="565" y="663" width="1" height="11" fill="#858585"/><rect x="572" y="663" width="1" height="11" fill="#858585"/><rect x="579" y="663" width="1" height="25" fill="#858585"/><rect x="586" y="663" width="1" height="11" fill="#858585"/><rect x="593" y="663" width="1" height="11" fill="#858585"/><rect x="600" y="663" width="1" height="11" fill="#858585"/><rect x="606" y="663" width="1" height="11" fill="#858585"/><rect x="613" y="663" width="1" height="11" fill="#858585"/><rect x="620" y="663" width="1" height="11" fill="#858585"/><rect x="627" y="663" width="1" height="11" fill="#858585"/><rect x="634" y="663" width="1" height="11" fill="#858585"/><rect x="641" y="663" width="1" height="11" fill="#858585"/><rect x="648" y="663" width="1" height="25" fill="#858585"/><rect x="655" y="663" width="1" height="11" fill="#858585"/><rect x="662" y="663" width="1" height="11" fill="#858585"/><rect x="669" y="663" width="1" height="11" fill="#858585"/><rect x="676" y="663" width="1" height="11" fill="#858585"/><rect x="683" y="663" width="1" height="11" fill="#858585"/><rect x="690" y="663" width="1" height="11" fill="#858585"/><rect x="697" y="663" width="1" height="11" fill="#858585"/><rect x="704" y="663" width="1" height="11" fill="#858585"/><rect x="711" y="663" width="1" height="11" fill="#858585"/><rect x="718" y="663" width="1" height="25" fill="#858585"/><rect x="724" y="663" width="1" height="11" fill="#858585"/><rect x="731" y="663" width="1" height="11" fill="#858585"/><rect x="738" y="663" width="1" height="11" fill="#858585"/><rect x="745" y="663" width="1" height="11" fill="#858585"/><rect x="752" y="663" width="1" height="11" fill="#858585"/><rect x="759" y="663" width="1" height="11" fill="#858585"/><rect x="766" y="663" width="1" height="11" fill="#858585"/><rect x="773" y="663" width="1" height="11" fill="#858585"/><rect x="780" y="663" width="1" height="11" fill="#858585"/><rect x="787" y="663" width="1" height="25" fill="#858585"/></svg>
<span id="t44" style="left:156.75px;top:673.4px;line-height:14px;font-size:11px;color:#000;letter-spacing:-0.375px;">10</span>
<span id="t45" style="left:226.75px;top:673.4px;line-height:14px;font-size:11px;color:#000;letter-spacing:-0.375px;">20</span>
<span id="t46" style="left:295.75px;top:673.4px;line-height:14px;font-size:11px;color:#000;letter-spacing:-0.375px;">30</span>
<span id="t47" style="left:364.75px;top:673.4px;line-height:14px;font-size:11px;color:#000;letter-spacing:-0.375px;">40</span>
<span id="t48" style="left:434.75px;top:673.4px;line-height:14px;font-size:11px;color:#000;letter-spacing:-0.375px;">50</span>
<span id="t49" style="left:503.75px;top:673.4px;line-height:14px;font-size:11px;color:#000;letter-spacing:-0.375px;">60</span>
<span id="t50" style="left:573.75px;top:673.4px;line-height:14px;font-size:11px;color:#000;letter-spacing:-0.375px;">70</span>
<span id="t51" style="left:642.75px;top:673.4px;line-height:14px;font-size:11px;color:#000;letter-spacing:-0.375px;">80</span>
<span id="t52" style="left:712.75px;top:673.4px;line-height:14px;font-size:11px;color:#000;letter-spacing:-0.375px;">90</span>
<span id="t53" style="left:779.0px;top:673.4px;line-height:14px;font-size:11px;color:#000;letter-spacing:-0.453px;">100</span>
<div style="left:89px;top:663px;width:9px;height:25px;background:#8fb0d2;"></div>
<div style="left:89px;top:663px;width:1px;height:25px;background:#76889a;"></div>
<div style="left:97px;top:663px;width:1px;height:25px;background:#76889a;"></div>
<div style="left:93px;top:663px;width:1px;height:25px;background:#4a617c;"></div>
<span id="t54" style="left:91.5px;top:674.5px;line-height:14px;font-size:11px;color:#1a2a40;">0</span>
<svg style="left:53px;top:666px;" width="18" height="18" viewBox="0 0 18 18"><rect x="0.5" y="1.5" width="16" height="5" fill="none" stroke="#111" stroke-width="1.2"/><path d="M2 4.5 q3 -2 6 0 t6 0" fill="none" stroke="#111" stroke-width="0.9"/><path d="M4.5 13 v-4 M2.5 11 l2 -2.5 l2 2.5 M12.5 8.5 v4 M10.5 10.5 l2 2.5 l2 -2.5" fill="none" stroke="#111" stroke-width="1.1"/><rect x="0.5" y="14.5" width="16" height="2.5" fill="#fff" stroke="#111" stroke-width="1.1"/><path d="M8.5 14.5 v2.5" stroke="#111" stroke-width="1"/></svg>
<div style="left:0px;top:688px;width:1024px;height:50px;background:#c5c5c5;"></div>
<div style="left:0px;top:688px;width:796px;height:1px;background:#ececec;"></div>
<div style="left:2px;top:691px;width:96px;height:21px;background:#dcc2c2;"></div>
<div style="left:2px;top:691px;width:96px;height:1px;background:#77735f;"></div>
<div style="left:2px;top:691px;width:1px;height:21px;background:#77735f;"></div>
<div style="left:2px;top:711px;width:96px;height:1px;background:#ffffff;"></div>
<div style="left:97px;top:691px;width:1px;height:21px;background:#ffffff;"></div>
<div style="left:2px;top:713px;width:96px;height:22px;background:#ffffff;"></div>
<div style="left:2px;top:713px;width:96px;height:1px;background:#77735f;"></div>
<div style="left:2px;top:713px;width:1px;height:22px;background:#77735f;"></div>
<div style="left:2px;top:734px;width:96px;height:1px;background:#ffffff;"></div>
<div style="left:97px;top:713px;width:1px;height:22px;background:#ffffff;"></div>
<div style="left:101px;top:690px;width:1px;height:48px;background:#f8f8f8;"></div>
<div style="left:102px;top:690px;width:1px;height:48px;background:#f8f8f8;"></div>
<div style="left:104px;top:690px;width:1px;height:48px;background:#858585;"></div>
<div style="left:107px;top:692px;width:72px;height:21px;background:#c5c5c5;"></div>
<div style="left:107px;top:692px;width:72px;height:1px;background:#7f7f7f;"></div>
<div style="left:107px;top:692px;width:1px;height:21px;background:#7f7f7f;"></div>
<div style="left:107px;top:712px;width:72px;height:1px;background:#e6e6e6;"></div>
<div style="left:178px;top:692px;width:1px;height:21px;background:#e6e6e6;"></div>
<span id="t55" style="left:113.5px;top:695.5px;line-height:14px;font-size:11px;color:#000;letter-spacing:-0.214px;">1 Shape Sele</span>
<div style="left:107px;top:718px;width:372px;height:20px;background:#c5c5c5;"></div>
<div style="left:107px;top:718px;width:372px;height:1px;background:#7f7f7f;"></div>
<div style="left:107px;top:718px;width:1px;height:20px;background:#7f7f7f;"></div>
<div style="left:107px;top:737px;width:372px;height:1px;background:#e6e6e6;"></div>
<div style="left:478px;top:718px;width:1px;height:20px;background:#e6e6e6;"></div>
<span id="t56" style="left:113.5px;top:720.5px;line-height:14px;font-size:11px;color:#000;letter-spacing:-0.165px;">Click or click-and-drag to select objects</span>
<svg style="left:186px;top:694px;" width="12" height="14" viewBox="0 0 12 14"><path d="M3.5 6.5 V4 Q3.5 1.6 6 1.6 Q8.5 1.6 8.5 4 V6.5" fill="none" stroke="#000" stroke-width="1.5"/><rect x="1.6" y="6" width="8.8" height="7.4" fill="#000"/><path d="M2.6 8.1 h6.8 M2.6 10.1 h6.8 M2.6 12.1 h6.8" stroke="#d8d8d8" stroke-width="0.8"/></svg>
<svg style="left:212px;top:694px;" width="16" height="16" viewBox="0 0 16 16"><rect x="0.5" y="0.5" width="14" height="14" fill="none" stroke="#111" stroke-width="1.1"/><path d="M0.5 7.5 H14.5 M7.5 0.5 V14.5" stroke="#111" stroke-width="1"/><circle cx="7.5" cy="7.5" r="2.2" fill="#858585" stroke="#111" stroke-width="1.1"/></svg>
<span id="t57" style="left:234.5px;top:695.5px;line-height:14px;font-size:11px;color:#000;letter-spacing:-0.203px;">X:</span>
<div style="left:245px;top:692px;width:58px;height:20px;background:#e1e1e1;"></div>
<div style="left:245px;top:692px;width:58px;height:1px;background:#2a2a2a;"></div>
<div style="left:245px;top:692px;width:1px;height:20px;background:#2a2a2a;"></div>
<div style="left:245px;top:711px;width:58px;height:1px;background:#ffffff;"></div>
<div style="left:302px;top:692px;width:1px;height:20px;background:#ffffff;"></div>
<div style="left:246px;top:693px;width:56px;height:1px;background:#7a7a7a;"></div>
<div style="left:246px;top:693px;width:1px;height:18px;background:#7a7a7a;"></div>
<span id="t58" style="left:250px;top:695.0px;line-height:14px;font-size:11px;color:#000;letter-spacing:-0.306px;">0,251</span>
<div style="left:304px;top:694px;width:10px;height:8px;background:#c5c5c5;"></div>
<div style="left:304px;top:694px;width:10px;height:1px;background:#ffffff;"></div>
<div style="left:304px;top:694px;width:1px;height:8px;background:#ffffff;"></div>
<div style="left:304px;top:701px;width:10px;height:1px;background:#7a7a7a;"></div>
<div style="left:313px;top:694px;width:1px;height:8px;background:#7a7a7a;"></div>
<div style="left:304px;top:702px;width:10px;height:8px;background:#c5c5c5;"></div>
<div style="left:304px;top:702px;width:10px;height:1px;background:#ffffff;"></div>
<div style="left:304px;top:702px;width:1px;height:8px;background:#ffffff;"></div>
<div style="left:304px;top:709px;width:10px;height:1px;background:#7a7a7a;"></div>
<div style="left:313px;top:702px;width:1px;height:8px;background:#7a7a7a;"></div>
<svg style="left:306px;top:696px;" width="6" height="12" viewBox="0 0 6 12"><path d="M0.5 3.5 H5.5 L3 0.5 Z M0.5 8.5 H5.5 L3 11.5 Z" fill="#000"/></svg>
<span id="t59" style="left:316.5px;top:695.5px;line-height:14px;font-size:11px;color:#000;letter-spacing:0.102px;">Y:</span>
<div style="left:327px;top:692px;width:57px;height:20px;background:#e1e1e1;"></div>
<div style="left:327px;top:692px;width:57px;height:1px;background:#2a2a2a;"></div>
<div style="left:327px;top:692px;width:1px;height:20px;background:#2a2a2a;"></div>
<div style="left:327px;top:711px;width:57px;height:1px;background:#ffffff;"></div>
<div style="left:383px;top:692px;width:1px;height:20px;background:#ffffff;"></div>
<div style="left:328px;top:693px;width:55px;height:1px;background:#7a7a7a;"></div>
<div style="left:328px;top:693px;width:1px;height:18px;background:#7a7a7a;"></div>
<span id="t60" style="left:332px;top:695.0px;line-height:14px;font-size:11px;color:#000;letter-spacing:-0.193px;">51,852</span>
<div style="left:386px;top:694px;width:10px;height:8px;background:#c5c5c5;"></div>
<div style="left:386px;top:694px;width:10px;height:1px;background:#ffffff;"></div>
<div style="left:386px;top:694px;width:1px;height:8px;background:#ffffff;"></div>
<div style="left:386px;top:701px;width:10px;height:1px;background:#7a7a7a;"></div>
<div style="left:395px;top:694px;width:1px;height:8px;background:#7a7a7a;"></div>
<div style="left:386px;top:702px;width:10px;height:8px;background:#c5c5c5;"></div>
<div style="left:386px;top:702px;width:10px;height:1px;background:#ffffff;"></div>
<div style="left:386px;top:702px;width:1px;height:8px;background:#ffffff;"></div>
<div style="left:386px;top:709px;width:10px;height:1px;background:#7a7a7a;"></div>
<div style="left:395px;top:702px;width:1px;height:8px;background:#7a7a7a;"></div>
<svg style="left:388px;top:696px;" width="6" height="12" viewBox="0 0 6 12"><path d="M0.5 3.5 H5.5 L3 0.5 Z M0.5 8.5 H5.5 L3 11.5 Z" fill="#000"/></svg>
<span id="t61" style="left:398.5px;top:695.5px;line-height:14px;font-size:11px;color:#000;letter-spacing:0.109px;">Z:</span>
<div style="left:409px;top:692px;width:57px;height:20px;background:#e1e1e1;"></div>
<div style="left:409px;top:692px;width:57px;height:1px;background:#2a2a2a;"></div>
<div style="left:409px;top:692px;width:1px;height:20px;background:#2a2a2a;"></div>
<div style="left:409px;top:711px;width:57px;height:1px;background:#ffffff;"></div>
<div style="left:465px;top:692px;width:1px;height:20px;background:#ffffff;"></div>
<div style="left:410px;top:693px;width:55px;height:1px;background:#7a7a7a;"></div>
<div style="left:410px;top:693px;width:1px;height:18px;background:#7a7a7a;"></div>
<span id="t62" style="left:414px;top:695.0px;line-height:14px;font-size:11px;color:#000;letter-spacing:-0.599px;">0,0</span>
<div style="left:468px;top:694px;width:10px;height:8px;background:#c5c5c5;"></div>
<div style="left:468px;top:694px;width:10px;height:1px;background:#ffffff;"></div>
<div style="left:468px;top:694px;width:1px;height:8px;background:#ffffff;"></div>
<div style="left:468px;top:701px;width:10px;height:1px;background:#7a7a7a;"></div>
<div style="left:477px;top:694px;width:1px;height:8px;background:#7a7a7a;"></div>
<div style="left:468px;top:702px;width:10px;height:8px;background:#c5c5c5;"></div>
<div style="left:468px;top:702px;width:10px;height:1px;background:#ffffff;"></div>
<div style="left:468px;top:702px;width:1px;height:8px;background:#ffffff;"></div>
<div style="left:468px;top:709px;width:10px;height:1px;background:#7a7a7a;"></div>
<div style="left:477px;top:702px;width:1px;height:8px;background:#7a7a7a;"></div>
<svg style="left:470px;top:696px;" width="6" height="12" viewBox="0 0 6 12"><path d="M0.5 3.5 H5.5 L3 0.5 Z M0.5 8.5 H5.5 L3 11.5 Z" fill="#000"/></svg>
<div style="left:107px;top:716px;width:372px;height:1px;background:#c5c5c5;"></div>
<div style="left:481px;top:692px;width:100px;height:21px;background:#c5c5c5;"></div>
<div style="left:481px;top:692px;width:100px;height:1px;background:#7f7f7f;"></div>
<div style="left:481px;top:692px;width:1px;height:21px;background:#7f7f7f;"></div>
<div style="left:481px;top:712px;width:100px;height:1px;background:#e6e6e6;"></div>
<div style="left:580px;top:692px;width:1px;height:21px;background:#e6e6e6;"></div>
<span id="t63" style="left:486.7px;top:695.5px;line-height:14px;font-size:11px;color:#000;letter-spacing:-0.203px;">Grid = 10,0</span>
<div style="left:481px;top:717px;width:100px;height:21px;background:#c5c5c5;"></div>
<div style="left:481px;top:717px;width:100px;height:1px;background:#7f7f7f;"></div>
<div style="left:481px;top:717px;width:1px;height:21px;background:#7f7f7f;"></div>
<div style="left:481px;top:737px;width:100px;height:1px;background:#e6e6e6;"></div>
<div style="left:580px;top:717px;width:1px;height:21px;background:#e6e6e6;"></div>
<span id="t64" style="left:487px;top:720.5px;line-height:14px;font-size:11px;color:#000;letter-spacing:0.078px;">Add Time Tag</span>
<div style="left:582px;top:691px;width:44px;height:44px;background:#c5c5c5;"></div>
<div style="left:582px;top:691px;width:44px;height:1px;background:#ffffff;"></div>
<div style="left:582px;top:691px;width:1px;height:44px;background:#ffffff;"></div>
<div style="left:582px;top:734px;width:44px;height:1px;background:#7f7f7f;"></div>
<div style="left:625px;top:691px;width:1px;height:44px;background:#7f7f7f;"></div>
<svg style="left:590px;top:705px;" width="30" height="14" viewBox="0 0 30 14"><circle cx="6" cy="7" r="4" fill="none" stroke="#000" stroke-width="2.2"/><path d="M10 7 H26.5" stroke="#000" stroke-width="2.4"/><path d="M21 7 V12 M25 7 V11" stroke="#000" stroke-width="2"/></svg>
<div style="left:629px;top:691px;width:48px;height:22px;background:#c5c5c5;"></div>
<div style="left:629px;top:691px;width:48px;height:1px;background:#ffffff;"></div>
<div style="left:629px;top:691px;width:1px;height:22px;background:#ffffff;"></div>
<div style="left:629px;top:712px;width:48px;height:1px;background:#7f7f7f;"></div>
<div style="left:676px;top:691px;width:1px;height:22px;background:#7f7f7f;"></div>
<span id="t65" style="left:632.5px;top:695.0px;line-height:14px;font-size:11px;color:#000;letter-spacing:-0.268px;">Auto Key</span>
<div style="left:629px;top:713px;width:48px;height:22px;background:#c5c5c5;"></div>
<div style="left:629px;top:713px;width:48px;height:1px;background:#ffffff;"></div>
<div style="left:629px;top:713px;width:1px;height:22px;background:#ffffff;"></div>
<div style="left:629px;top:734px;width:48px;height:1px;background:#7f7f7f;"></div>
<div style="left:676px;top:713px;width:1px;height:22px;background:#7f7f7f;"></div>
<span id="t66" style="left:635.5px;top:717.0px;line-height:14px;font-size:11px;color:#000;letter-spacing:-0.219px;">Set Key</span>
<div style="left:680px;top:691px;width:115px;height:21px;background:#e1e1e1;"></div>
<div style="left:680px;top:691px;width:115px;height:1px;background:#5a5a5a;"></div>
<div style="left:680px;top:691px;width:1px;height:21px;background:#5a5a5a;"></div>
<div style="left:680px;top:711px;width:115px;height:1px;background:#ffffff;"></div>
<div style="left:794px;top:691px;width:1px;height:21px;background:#ffffff;"></div>
<div style="left:681px;top:692px;width:113px;height:1px;background:#9a9a9a;"></div>
<div style="left:681px;top:692px;width:1px;height:19px;background:#9a9a9a;"></div>
<div style="left:777px;top:693px;width:16px;height:17px;background:#ece9d8;"></div>
<div style="left:777px;top:693px;width:16px;height:1px;background:#fff;"></div>
<div style="left:777px;top:693px;width:1px;height:17px;background:#fff;"></div>
<div style="left:777px;top:709px;width:16px;height:1px;background:#7a7868;"></div>
<div style="left:792px;top:693px;width:1px;height:17px;background:#7a7868;"></div>
<svg style="left:781px;top:700px;" width="8" height="4" viewBox="0 0 8 4"><path d="M0 0 H7 L3.5 3.5 Z" fill="#000"/></svg>
<span id="t67" style="left:684.5px;top:694.5px;line-height:14px;font-size:11px;color:#000;letter-spacing:-0.164px;">Selected</span>
<div style="left:680px;top:714px;width:116px;height:21px;background:#c5c5c5;"></div>
<div style="left:680px;top:714px;width:116px;height:1px;background:#ffffff;"></div>
<div style="left:680px;top:714px;width:1px;height:21px;background:#ffffff;"></div>
<div style="left:680px;top:734px;width:116px;height:1px;background:#7f7f7f;"></div>
<div style="left:795px;top:714px;width:1px;height:21px;background:#7f7f7f;"></div>
<span id="t68" style="left:710.5px;top:717.5px;line-height:14px;font-size:11px;color:#000;letter-spacing:-0.366px;">Key Filters...</span>
<svg style="left:0px;top:0px;" width="1024" height="738" viewBox="0 0 1024 738"><path d="M805 698 V707" stroke="#000" stroke-width="1.6"/><path d="M813 698 V707 L806 702.5 Z M820 698 V707 L813 702.5 Z" fill="#000"/><path d="M838 698.5 V706.5 L832 702.5 Z" fill="#000"/><path d="M840.5 698.5 V706.5 M844 698.5 V706.5" stroke="#000" stroke-width="1.8"/><rect x="854" y="694.5" width="14" height="14" fill="none" stroke="#000" stroke-width="2"/><path d="M858 697.5 V705.5 L865 701.5 Z" fill="#000"/><path d="M871 706.5 V711.5 H866 Z" fill="#ffffff"/><path d="M871 708.3 V711.5 H867.8 Z" fill="#000"/><path d="M878 698.5 V706.5 M881.5 698.5 V706.5" stroke="#000" stroke-width="1.8"/><path d="M884 698.5 V706.5 L890 702.5 Z" fill="#000"/><path d="M902 698 V707 L909 702.5 Z M909 698 V707 L916 702.5 Z" fill="#000"/><path d="M917 698 V707" stroke="#000" stroke-width="1.6"/><path d="M807 719.5 V727 M817.5 719.5 V727" stroke="#000" stroke-width="1.3"/><path d="M812 719.5 V727 L808 723.2 Z M812.5 719.5 V727 L816.5 723.2 Z" fill="#000"/><rect x="908.5" y="718.5" width="9" height="10" fill="#e8e8e8" stroke="#000" stroke-width="1.2"/><path d="M908 718.5 h10" stroke="#000" stroke-width="2"/><circle cx="916.5" cy="726" r="4" fill="none" stroke="#b01818" stroke-width="1"/><path d="M916.5 723.5 V726.5 M914.5 726.5 H918.5" stroke="#000" stroke-width="1"/></svg>
<div style="left:825px;top:694px;width:1px;height:16px;background:#7a7a7a;"></div>
<div style="left:826px;top:694px;width:1px;height:16px;background:#ececec;"></div>
<div style="left:898px;top:694px;width:1px;height:16px;background:#7a7a7a;"></div>
<div style="left:899px;top:694px;width:1px;height:16px;background:#ececec;"></div>
<div style="left:926px;top:694px;width:1px;height:16px;background:#7a7a7a;"></div>
<div style="left:927px;top:694px;width:1px;height:16px;background:#ececec;"></div>
<div style="left:825px;top:716px;width:1px;height:16px;background:#7a7a7a;"></div>
<div style="left:826px;top:716px;width:1px;height:16px;background:#ececec;"></div>
<div style="left:926px;top:716px;width:1px;height:16px;background:#7a7a7a;"></div>
<div style="left:927px;top:716px;width:1px;height:16px;background:#ececec;"></div>
<div style="left:828px;top:715px;width:63px;height:19px;background:#e1e1e1;"></div>
<div style="left:828px;top:715px;width:63px;height:1px;background:#2a2a2a;"></div>
<div style="left:828px;top:715px;width:1px;height:19px;background:#2a2a2a;"></div>
<div style="left:828px;top:733px;width:63px;height:1px;background:#ffffff;"></div>
<div style="left:890px;top:715px;width:1px;height:19px;background:#ffffff;"></div>
<div style="left:829px;top:716px;width:61px;height:1px;background:#7a7a7a;"></div>
<div style="left:829px;top:716px;width:1px;height:17px;background:#7a7a7a;"></div>
<span id="t69" style="left:833px;top:717.5px;line-height:14px;font-size:11px;color:#000;letter-spacing:-0.125px;">0</span>
<div style="left:893px;top:716px;width:10px;height:8px;background:#c5c5c5;"></div>
<div style="left:893px;top:716px;width:10px;height:1px;background:#ffffff;"></div>
<div style="left:893px;top:716px;width:1px;height:8px;background:#ffffff;"></div>
<div style="left:893px;top:723px;width:10px;height:1px;background:#7a7a7a;"></div>
<div style="left:902px;top:716px;width:1px;height:8px;background:#7a7a7a;"></div>
<div style="left:893px;top:724px;width:10px;height:9px;background:#c5c5c5;"></div>
<div style="left:893px;top:724px;width:10px;height:1px;background:#ffffff;"></div>
<div style="left:893px;top:724px;width:1px;height:9px;background:#ffffff;"></div>
<div style="left:893px;top:732px;width:10px;height:1px;background:#7a7a7a;"></div>
<div style="left:902px;top:724px;width:1px;height:9px;background:#7a7a7a;"></div>
<svg style="left:895px;top:718px;" width="6" height="13" viewBox="0 0 6 13"><path d="M0.5 3.5 H5.5 L3 0.5 Z M0.5 9.5 H5.5 L3 12.5 Z" fill="#000"/></svg>
<svg style="left:0px;top:0px;" width="1024" height="738" viewBox="0 0 1024 738"><circle cx="937" cy="699.5" r="4.6" fill="#e4e8f0" stroke="#1c2a9c" stroke-width="1.2"/><path d="M940.22 702.72 l5.8 6.199999999999999" stroke="#1c2a9c" stroke-width="1.8"/><path d="M941.9399999999999 705.04 l3.6799999999999997 4.6" stroke="#4a8ae8" stroke-width="1"/><g fill="none" stroke="#8c1c1c" stroke-width="1.2"><rect x="958.5" y="695.5" width="11" height="9"/><path d="M964 695.5 V704.5 M958.5 700 H969.5"/></g><circle cx="958" cy="703" r="3.2" fill="#e4e8f0" stroke="#1c2a9c" stroke-width="1.2"/><path d="M960.24 705.24 l4.4 4.8000000000001" stroke="#1c2a9c" stroke-width="1.8"/><path d="M961.68 707.28 l2.5600000000000005 3.2" stroke="#4a8ae8" stroke-width="1"/><path d="M979.5 697.5 h7 l3 -2 v8 l-3 2 h-7 Z" fill="#e8ecf4" stroke="#1c2a9c" stroke-width="1.2"/><path d="M979.5 697.5 l3 -2 h7 M986.5 697.5 v8" fill="none" stroke="#1c2a9c" stroke-width="1"/><path d="M986.5 697.5 l3 -2 v8 l-3 2 Z" fill="#5a5a5a"/><path d="M977.5 697 v-2.5 h2.5 M990 694.5 h2.5 v2.5 M977.5 706 v2.5 h2.5 M992.5 706 v2.5 h-2.5" fill="none" stroke="#111" stroke-width="1.2"/><path d="M995 706 V711 H990 Z" fill="#ffffff"/><path d="M995 707.8 V711 H991.8 Z" fill="#000"/><g fill="none" stroke="#8c1c1c" stroke-width="1.2"><rect x="1004.5" y="695.5" width="11" height="9"/><path d="M1010 695.5 V704.5 M1004.5 700 H1015.5"/></g><path d="M1000.5 702.5 h6 l2.5 -2 v6 l-2.5 2 h-6 Z" fill="#e8ecf4" stroke="#1c2a9c" stroke-width="1.1"/><path d="M1000.5 702.5 l2.5 -2 h6 M1006.5 702.5 v6" fill="none" stroke="#1c2a9c" stroke-width="1"/><path d="M1018 706 V711 H1013 Z" fill="#ffffff"/><path d="M1018 707.8 V711 H1014.8 Z" fill="#000"/><rect x="932" y="717" width="14" height="13" fill="#dcdcdc" stroke="#111" stroke-width="1.4" stroke-dasharray="2 1.5"/><circle cx="937" cy="721.5" r="2.8" fill="#e4e8f0" stroke="#1c2a9c" stroke-width="1.2"/><path d="M938.96 723.46 l4.0 4.4" stroke="#1c2a9c" stroke-width="1.8"/><path d="M940.3199999999999 725.42 l2.2399999999999998 2.8" stroke="#4a8ae8" stroke-width="1"/><path d="M957 724 L959.5 722.5 L961 725 V719 Q962 717.5 963 719 V717.5 Q964 716 965 717.5 V718 Q966 716.5 967 718 V719.5 Q968 718.5 969 720 V726 Q968 729 966.5 731 H960.5 Z" fill="#f4f4f4" stroke="#111" stroke-width="1" stroke-dasharray="1 0.6"/><circle cx="984" cy="724" r="5" fill="none" stroke="#111" stroke-width="1.1"/><path d="M984 724 V716.5 M984 724 H992 M984 724 L978.5 729.5" stroke="#1c2a9c" stroke-width="1.3"/><path d="M982 718 l2 -2.5 l2 2.5 Z M990.5 722 l2.5 2 l-2.5 2 Z M977.5 728 v2.5 h2.5 Z" fill="#111"/><path d="M995 728 V733 H990 Z" fill="#ffffff"/><path d="M995 729.8 V733 H991.8 Z" fill="#000"/><rect x="1007.5" y="722.5" width="8" height="8" fill="none" stroke="#111" stroke-width="1.3"/><rect x="1001.5" y="716.5" width="11" height="11" fill="#c5c5c5" stroke="#1c2a9c" stroke-width="1.4"/><path d="M1004.5 719.5 l5 5" stroke="#111" stroke-width="1" stroke-dasharray="1.5 1"/><path d="M1004 719 h3 l-3 3 Z" fill="#111"/></svg>
</body></html>
